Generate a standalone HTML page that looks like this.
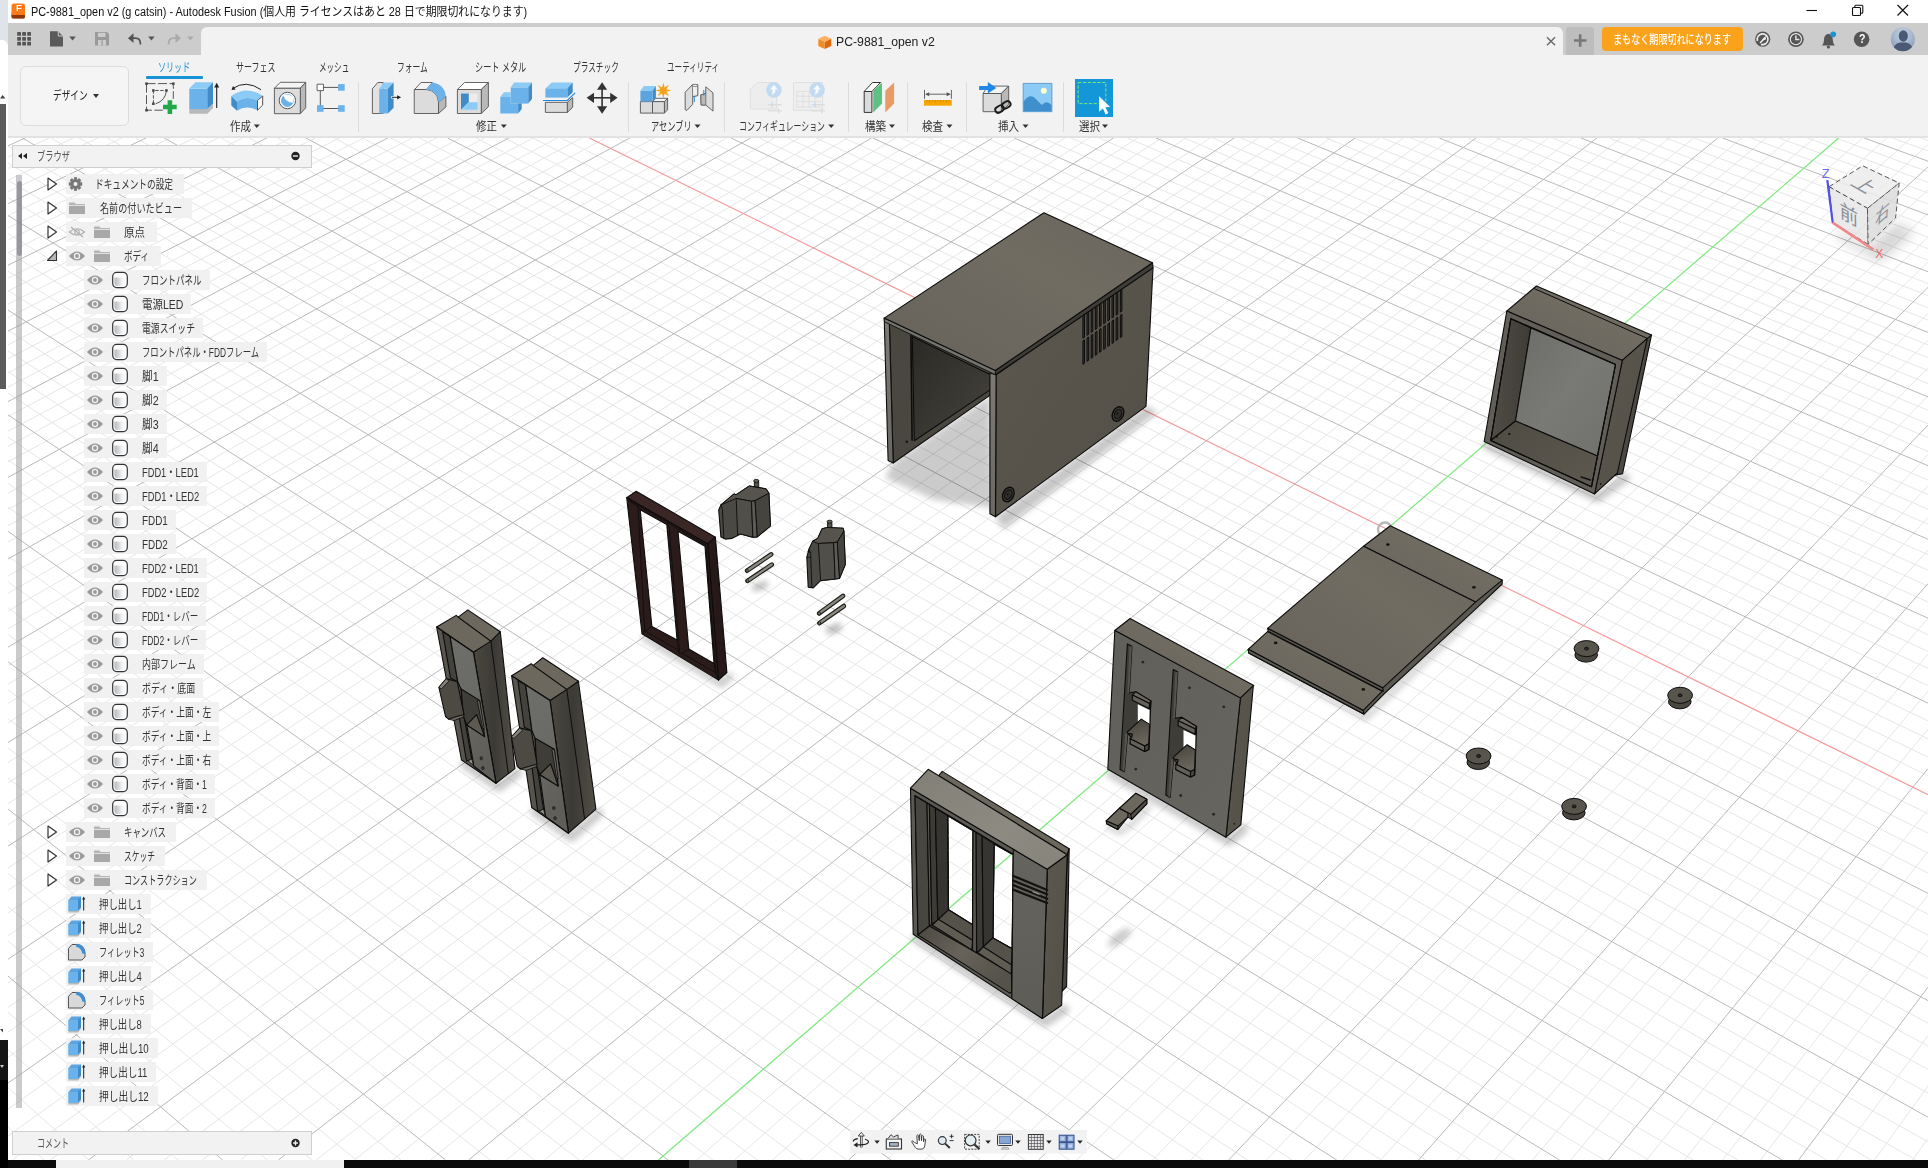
<!DOCTYPE html>
<html lang="ja"><head><meta charset="utf-8"><title>PC-9881_open v2 - Autodesk Fusion</title>
<style>
html,body{margin:0;padding:0;background:#fff;}
body{width:1928px;height:1168px;overflow:hidden;position:relative;font-family:"Liberation Sans","Noto Sans CJK JP",sans-serif;}
#r{position:absolute;left:0;top:0;width:1928px;height:1168px;overflow:hidden;}
#r div{position:absolute;}
#r svg{position:absolute;left:0;top:0;}
.t{position:absolute;white-space:nowrap;transform-origin:0 50%;line-height:16px;height:16px;display:inline-block;}
</style></head>
<body><div id="r">
<svg width="1928" height="1168" viewBox="0 0 1928 1168">
<defs><clipPath id="vpc"><rect x="8" y="138" width="1920" height="1022"/></clipPath></defs>
<rect x="8" y="138" width="1920" height="1022" fill="#ffffff"/>
<g clip-path="url(#vpc)">
<g id="grid"><path d="M8.0 157.1L49.2 138.0M8.0 168.5L73.4 138.0M8.0 180.1L97.6 138.0M8.0 191.8L121.8 138.0M8.0 215.6L170.2 138.0M8.0 227.8L194.4 138.0M8.0 240.1L218.6 138.0M8.0 252.6L242.7 138.0M8.0 278.1L291.1 138.0M8.0 291.0L315.3 138.0M8.0 304.2L339.5 138.0M8.0 317.6L363.7 138.0M8.0 344.8L412.1 138.0M8.0 1127.1L44.3 1160.0M8.0 358.7L436.2 138.0M8.0 1087.7L88.9 1160.0M8.0 372.8L460.4 138.0M8.0 1049.5L133.5 1160.0M8.0 387.1L484.6 138.0M8.0 1012.3L178.1 1160.0M8.0 416.4L533.0 138.0M8.0 940.9L267.2 1160.0M8.0 431.3L557.2 138.0M8.0 906.6L311.8 1160.0M8.0 446.4L581.4 138.0M8.0 873.2L356.3 1160.0M8.0 461.8L605.5 138.0M8.0 840.7L400.9 1160.0M8.0 493.2L653.9 138.0M8.0 778.0L490.1 1160.0M8.0 509.3L678.1 138.0M8.0 747.9L534.6 1160.0M8.0 525.6L702.3 138.0M8.0 718.5L579.2 1160.0M8.0 542.2L726.5 138.0M8.0 689.8L623.8 1160.0M8.0 576.0L774.8 138.0M8.0 634.5L712.9 1160.0M8.0 593.4L799.0 138.0M8.0 607.8L757.4 1160.0M8.0 611.0L823.2 138.0M8.0 581.7L802.0 1160.0M8.0 628.9L847.4 138.0M8.0 556.3L846.6 1160.0M8.0 665.5L895.7 138.0M8.0 507.0L935.7 1160.0M8.0 684.3L919.9 138.0M8.0 483.2L980.3 1160.0M8.0 703.4L944.1 138.0M8.0 459.9L1024.8 1160.0M8.0 722.7L968.3 138.0M8.0 437.1L1069.4 1160.0M8.0 762.5L1016.6 138.0M8.0 393.0L1158.5 1160.0M8.0 782.9L1040.8 138.0M8.0 371.6L1203.1 1160.0M8.0 803.6L1065.0 138.0M8.0 350.7L1247.6 1160.0M8.0 824.7L1089.2 138.0M8.0 330.2L1292.2 1160.0M8.0 868.0L1137.5 138.0M8.0 290.4L1381.3 1160.0M8.0 890.2L1161.7 138.0M8.0 271.1L1425.8 1160.0M8.0 912.8L1185.9 138.0M8.0 252.2L1470.4 1160.0M8.0 935.8L1210.1 138.0M8.0 233.7L1515.0 1160.0M8.0 983.1L1258.4 138.0M8.0 197.7L1604.1 1160.0M8.0 1007.4L1282.6 138.0M8.0 180.2L1648.6 1160.0M8.0 1032.1L1306.8 138.0M8.0 163.0L1693.2 1160.0M8.0 1057.3L1330.9 138.0M8.0 146.1L1737.7 1160.0M8.0 1109.2L1379.3 138.0M50.8 138.0L1826.8 1160.0M8.0 1135.9L1403.5 138.0M79.1 138.0L1871.4 1160.0M12.3 1160.0L1427.6 138.0M107.5 138.0L1915.9 1160.0M50.3 1160.0L1451.8 138.0M135.8 138.0L1928.0 1141.8M126.4 1160.0L1500.2 138.0M192.5 138.0L1928.0 1093.1M164.4 1160.0L1524.3 138.0M220.9 138.0L1928.0 1069.4M202.4 1160.0L1548.5 138.0M249.2 138.0L1928.0 1046.1M240.4 1160.0L1572.7 138.0M277.6 138.0L1928.0 1023.1M316.4 1160.0L1621.0 138.0M334.2 138.0L1928.0 978.5M354.5 1160.0L1645.2 138.0M362.6 138.0L1928.0 956.7M392.5 1160.0L1669.4 138.0M390.9 138.0L1928.0 935.2M430.5 1160.0L1693.5 138.0M419.3 138.0L1928.0 914.2M506.5 1160.0L1741.9 138.0M475.9 138.0L1928.0 873.0M544.5 1160.0L1766.1 138.0M504.3 138.0L1928.0 852.9M582.5 1160.0L1790.2 138.0M532.6 138.0L1928.0 833.2M620.5 1160.0L1814.4 138.0M561.0 138.0L1928.0 813.7M696.5 1160.0L1862.7 138.0M617.6 138.0L1928.0 775.7M734.5 1160.0L1886.9 138.0M646.0 138.0L1928.0 757.1M772.6 1160.0L1911.1 138.0M674.3 138.0L1928.0 738.8M810.6 1160.0L1928.0 144.6M702.7 138.0L1928.0 720.8M886.6 1160.0L1928.0 189.8M759.3 138.0L1928.0 685.6M924.6 1160.0L1928.0 213.2M787.7 138.0L1928.0 668.4M962.6 1160.0L1928.0 237.3M816.0 138.0L1928.0 651.4M1000.6 1160.0L1928.0 262.0M844.3 138.0L1928.0 634.7M1076.6 1160.0L1928.0 313.4M901.0 138.0L1928.0 602.0M1114.6 1160.0L1928.0 340.2M929.3 138.0L1928.0 586.0M1152.6 1160.0L1928.0 367.7M957.7 138.0L1928.0 570.2M1190.6 1160.0L1928.0 395.9M986.0 138.0L1928.0 554.7M1266.6 1160.0L1928.0 454.9M1042.7 138.0L1928.0 524.2M1304.6 1160.0L1928.0 485.7M1071.0 138.0L1928.0 509.3M1342.6 1160.0L1928.0 517.4M1099.3 138.0L1928.0 494.5M1380.6 1160.0L1928.0 550.0M1127.7 138.0L1928.0 480.0M1456.6 1160.0L1928.0 618.4M1184.3 138.0L1928.0 451.5M1494.6 1160.0L1928.0 654.1M1212.7 138.0L1928.0 437.6M1532.6 1160.0L1928.0 691.1M1241.0 138.0L1928.0 423.8M1570.6 1160.0L1928.0 729.2M1269.3 138.0L1928.0 410.3M1646.6 1160.0L1928.0 809.4M1326.0 138.0L1928.0 383.6M1684.6 1160.0L1928.0 851.5M1354.3 138.0L1928.0 370.6M1722.6 1160.0L1928.0 895.1M1382.6 138.0L1928.0 357.7M1760.6 1160.0L1928.0 940.3M1411.0 138.0L1928.0 344.9M1836.6 1160.0L1928.0 1035.6M1467.6 138.0L1928.0 320.0M1874.6 1160.0L1928.0 1085.9M1496.0 138.0L1928.0 307.7M1912.6 1160.0L1928.0 1138.2M1524.3 138.0L1928.0 295.6M1552.6 138.0L1928.0 283.6M1609.3 138.0L1928.0 260.2M1637.6 138.0L1928.0 248.6M1665.9 138.0L1928.0 237.2M1694.2 138.0L1928.0 226.0M1750.9 138.0L1928.0 203.9M1779.2 138.0L1928.0 193.0M1807.5 138.0L1928.0 182.3M1835.8 138.0L1928.0 171.7M1892.5 138.0L1928.0 150.8M1920.8 138.0L1928.0 140.6" stroke="#e5e5e5" stroke-width="0.95" fill="none"/>
<path d="M8.0 145.8L25.0 138.0M8.0 203.6L146.0 138.0M8.0 265.2L266.9 138.0M8.0 331.1L387.9 138.0M8.0 401.6L508.8 138.0M8.0 976.1L222.6 1160.0M8.0 477.4L629.7 138.0M8.0 809.0L445.5 1160.0M8.0 559.0L750.6 138.0M8.0 661.8L668.3 1160.0M8.0 647.1L871.6 138.0M8.0 531.3L891.1 1160.0M8.0 742.5L992.5 138.0M8.0 414.8L1113.9 1160.0M8.0 846.1L1113.4 138.0M8.0 310.1L1336.7 1160.0M8.0 959.2L1234.2 138.0M8.0 215.5L1559.5 1160.0M8.0 1083.0L1355.1 138.0M22.4 138.0L1782.3 1160.0M88.4 1160.0L1476.0 138.0M164.2 138.0L1928.0 1117.2M278.4 1160.0L1596.9 138.0M305.9 138.0L1928.0 1000.6M468.5 1160.0L1717.7 138.0M447.6 138.0L1928.0 893.4M848.6 1160.0L1928.0 166.9M731.0 138.0L1928.0 703.1M1038.6 1160.0L1928.0 287.4M872.7 138.0L1928.0 618.2M1228.6 1160.0L1928.0 425.0M1014.3 138.0L1928.0 539.3M1418.6 1160.0L1928.0 583.7M1156.0 138.0L1928.0 465.7M1608.6 1160.0L1928.0 768.6M1297.7 138.0L1928.0 396.9M1798.6 1160.0L1928.0 987.1M1439.3 138.0L1928.0 332.4M1580.9 138.0L1928.0 271.8M1722.6 138.0L1928.0 214.9M1864.2 138.0L1928.0 161.2" stroke="#b9b9b9" stroke-width="1" fill="none"/>
<path d="M589.3 138.0L1928.0 794.6" stroke="#f59a9a" stroke-width="1.2" fill="none"/>
<path d="M658.5 1160.0L1838.6 138.0" stroke="#7be87b" stroke-width="1.2" fill="none"/>
</g>
<defs>
<filter id="bl3" x="-30%" y="-30%" width="160%" height="160%"><feGaussianBlur stdDeviation="3"/></filter>
<filter id="bl6" x="-30%" y="-30%" width="160%" height="160%"><feGaussianBlur stdDeviation="6"/></filter>
<filter id="bl10" x="-30%" y="-30%" width="160%" height="160%"><feGaussianBlur stdDeviation="10"/></filter>
<linearGradient id="gTop" x1="0" y1="1" x2="1" y2="0"><stop offset="0" stop-color="#66625a"/><stop offset="0.6" stop-color="#706c62"/><stop offset="1" stop-color="#6a665d"/></linearGradient>
<linearGradient id="gRight" x1="0" y1="0" x2="1" y2="1"><stop offset="0" stop-color="#5c5850"/><stop offset="1" stop-color="#524f47"/></linearGradient>
<linearGradient id="gIn" x1="0" y1="0" x2="1" y2="1"><stop offset="0" stop-color="#2b2a26"/><stop offset="1" stop-color="#46433c"/></linearGradient>
<linearGradient id="gEdge" x1="0" y1="0" x2="0" y2="1"><stop offset="0" stop-color="#7c7a73"/><stop offset="1" stop-color="#6a6862"/></linearGradient>
<linearGradient id="gInL" x1="0" y1="0" x2="1" y2="0"><stop offset="0" stop-color="#504d46"/><stop offset="1" stop-color="#3e3c36"/></linearGradient>
<linearGradient id="gBack" x1="0" y1="0" x2="1" y2="1"><stop offset="0" stop-color="#6c6d68"/><stop offset="0.5" stop-color="#797a75"/><stop offset="1" stop-color="#6f706b"/></linearGradient>
<linearGradient id="gFloor" x1="0" y1="0" x2="1" y2="1"><stop offset="0" stop-color="#4e4b43"/><stop offset="1" stop-color="#5d594f"/></linearGradient>
<linearGradient id="gFront" x1="0" y1="0" x2="1" y2="1"><stop offset="0" stop-color="#615f59"/><stop offset="1" stop-color="#666560"/></linearGradient>
<linearGradient id="gShelf" x1="0" y1="0" x2="0.3" y2="1"><stop offset="0" stop-color="#45423c"/><stop offset="1" stop-color="#6a665c"/></linearGradient>
<linearGradient id="gFloor2" x1="0" y1="0" x2="1" y2="0.6"><stop offset="0" stop-color="#4b4841"/><stop offset="0.5" stop-color="#67635a"/><stop offset="1" stop-color="#55524a"/></linearGradient>
<linearGradient id="gCol" x1="0" y1="0" x2="0" y2="1"><stop offset="0" stop-color="#65645f"/><stop offset="1" stop-color="#5d5c57"/></linearGradient>
<linearGradient id="gTopL" x1="0" y1="0" x2="1" y2="1"><stop offset="0" stop-color="#827f77"/><stop offset="0.6" stop-color="#8d8a82"/><stop offset="1" stop-color="#86837b"/></linearGradient>
<linearGradient id="gFddR" x1="0" y1="0" x2="1" y2="0"><stop offset="0" stop-color="#4b4841"/><stop offset="0.5" stop-color="#3c3a35"/><stop offset="1" stop-color="#524f47"/></linearGradient>
<linearGradient id="gFddP" x1="0" y1="0" x2="0.4" y2="1"><stop offset="0" stop-color="#6e6e6a"/><stop offset="0.5" stop-color="#6a6a66"/><stop offset="1" stop-color="#5f5e59"/></linearGradient>
</defs>
<polygon points="893,462 990,396 993,508 935,500 885,478" fill="#000" opacity="0.2" filter="url(#bl3)"/>
<polygon points="995,517 1146,406 1158,412 1004,529" fill="#000" opacity="0.22" filter="url(#bl3)"/>
<polygon points="889.3,319.7 990.5,369.9 990.5,394.9 893.2,463.0" fill="#4a4740" stroke="#0c0c0c" stroke-width="1.1" stroke-linejoin="round" />
<polygon points="912.3,336.4 990.5,374.8 990.5,389.6 914.3,440.7" fill="url(#gIn)" stroke="#0c0c0c" stroke-width="1.1" stroke-linejoin="round" />
<polyline points="910.9,335.4 912.1,440.2" fill="none" stroke="#0c0c0c" stroke-width="1.6" stroke-linecap="round" stroke-linejoin="round" />
<ellipse cx="906.8" cy="441.7" rx="1.2" ry="1.2" fill="#111" stroke="none" stroke-width="0" transform="rotate(0 906.8 441.7)" />
<polygon points="884.2,318.1 889.3,320.7 893.2,463.0 888.1,460.4" fill="url(#gEdge)" stroke="#0c0c0c" stroke-width="1.1" stroke-linejoin="round" />
<polygon points="996.1,374.7 1153.0,267.9 1146.0,406.4 995.5,516.7" fill="url(#gRight)" stroke="#0c0c0c" stroke-width="1.1" stroke-linejoin="round" />
<polygon points="1082.9,312.9 1084.5,311.8 1084.5,337.1 1082.9,338.2" fill="#3a3833" stroke="#0c0c0c" stroke-width="1" stroke-linejoin="round" />
<polygon points="1087.0,310.2 1088.7,309.1 1088.7,334.2 1087.0,335.3" fill="#3a3833" stroke="#0c0c0c" stroke-width="1" stroke-linejoin="round" />
<polygon points="1091.2,307.5 1092.8,306.5 1092.8,331.3 1091.2,332.4" fill="#3a3833" stroke="#0c0c0c" stroke-width="1" stroke-linejoin="round" />
<polygon points="1095.3,304.9 1097.0,303.8 1097.0,328.4 1095.3,329.5" fill="#3a3833" stroke="#0c0c0c" stroke-width="1" stroke-linejoin="round" />
<polygon points="1099.5,302.2 1101.1,301.1 1101.1,325.6 1099.5,326.7" fill="#3a3833" stroke="#0c0c0c" stroke-width="1" stroke-linejoin="round" />
<polygon points="1103.7,299.6 1105.3,298.5 1105.3,322.7 1103.7,323.8" fill="#3a3833" stroke="#0c0c0c" stroke-width="1" stroke-linejoin="round" />
<polygon points="1107.8,296.9 1109.5,295.8 1109.5,319.8 1107.8,320.9" fill="#3a3833" stroke="#0c0c0c" stroke-width="1" stroke-linejoin="round" />
<polygon points="1112.0,294.2 1113.6,293.1 1113.6,316.9 1112.0,318.0" fill="#3a3833" stroke="#0c0c0c" stroke-width="1" stroke-linejoin="round" />
<polygon points="1116.1,291.6 1117.8,290.5 1117.8,314.0 1116.1,315.1" fill="#3a3833" stroke="#0c0c0c" stroke-width="1" stroke-linejoin="round" />
<polygon points="1120.3,288.9 1121.9,287.8 1121.9,311.1 1120.3,312.2" fill="#3a3833" stroke="#0c0c0c" stroke-width="1" stroke-linejoin="round" />
<polygon points="1082.9,341.0 1084.5,339.9 1084.5,363.2 1082.9,364.2" fill="#3a3833" stroke="#0c0c0c" stroke-width="1" stroke-linejoin="round" />
<polygon points="1087.0,338.1 1088.7,337.0 1088.7,360.2 1087.0,361.3" fill="#3a3833" stroke="#0c0c0c" stroke-width="1" stroke-linejoin="round" />
<polygon points="1091.2,335.3 1092.8,334.2 1092.8,357.2 1091.2,358.3" fill="#3a3833" stroke="#0c0c0c" stroke-width="1" stroke-linejoin="round" />
<polygon points="1095.3,332.4 1097.0,331.3 1097.0,354.2 1095.3,355.3" fill="#3a3833" stroke="#0c0c0c" stroke-width="1" stroke-linejoin="round" />
<polygon points="1099.5,329.6 1101.1,328.5 1101.1,351.3 1099.5,352.4" fill="#3a3833" stroke="#0c0c0c" stroke-width="1" stroke-linejoin="round" />
<polygon points="1103.7,326.7 1105.3,325.6 1105.3,348.3 1103.7,349.4" fill="#3a3833" stroke="#0c0c0c" stroke-width="1" stroke-linejoin="round" />
<polygon points="1107.8,323.9 1109.5,322.8 1109.5,345.3 1107.8,346.4" fill="#3a3833" stroke="#0c0c0c" stroke-width="1" stroke-linejoin="round" />
<polygon points="1112.0,321.0 1113.6,319.9 1113.6,342.4 1112.0,343.5" fill="#3a3833" stroke="#0c0c0c" stroke-width="1" stroke-linejoin="round" />
<polygon points="1116.1,318.2 1117.8,317.1 1117.8,339.4 1116.1,340.5" fill="#3a3833" stroke="#0c0c0c" stroke-width="1" stroke-linejoin="round" />
<polygon points="1120.3,315.3 1121.9,314.2 1121.9,336.4 1120.3,337.5" fill="#3a3833" stroke="#0c0c0c" stroke-width="1" stroke-linejoin="round" />
<ellipse cx="1008.3" cy="494.6" rx="5.4" ry="7.6" fill="#3f3d38" stroke="#0c0c0c" stroke-width="1.4" transform="rotate(25 1008.3 494.6)" />
<ellipse cx="1008.3" cy="494.6" rx="3.4" ry="5.1" fill="#2f2d29" stroke="#0c0c0c" stroke-width="1" transform="rotate(25 1008.3 494.6)" />
<ellipse cx="1007.7" cy="494.3" rx="0.8" ry="1.1" fill="#111" stroke="none" stroke-width="0" transform="rotate(25 1007.7 494.3)" />
<ellipse cx="1118.0" cy="414.0" rx="5.4" ry="7.6" fill="#3f3d38" stroke="#0c0c0c" stroke-width="1.4" transform="rotate(25 1118.0 414.0)" />
<ellipse cx="1118.0" cy="414.0" rx="3.4" ry="5.1" fill="#2f2d29" stroke="#0c0c0c" stroke-width="1" transform="rotate(25 1118.0 414.0)" />
<ellipse cx="1117.4" cy="413.7" rx="0.8" ry="1.1" fill="#111" stroke="none" stroke-width="0" transform="rotate(25 1117.4 413.7)" />
<polygon points="989.9,373.0 996.1,374.7 995.5,516.7 989.9,513.8" fill="url(#gEdge)" stroke="#0c0c0c" stroke-width="1.1" stroke-linejoin="round" />
<polygon points="995.3,370.5 1152.5,262.8 1153.0,267.9 995.5,374.7" fill="#3f3d38" stroke="#0c0c0c" stroke-width="1.1" stroke-linejoin="round" />
<polygon points="884.2,318.1 995.3,370.5 995.3,374.7 884.5,321.8" fill="#74746e" stroke="#0c0c0c" stroke-width="0.9" stroke-linejoin="round" />
<polygon points="1043.9,212.7 1152.5,262.8 995.3,370.5 884.2,318.1" fill="url(#gTop)" stroke="#0c0c0c" stroke-width="1.1" stroke-linejoin="round" />
<polyline points="1484.2,441.5 1594.6,493.9 1622.5,473.8" fill="none" stroke="#000" stroke-width="9" stroke-linejoin="round" stroke-linecap="round" opacity="0.22" filter="url(#bl3)" transform="translate(3,4)"/>
<polygon points="1643.9,339.8 1651.5,334.9 1622.5,473.8 1614.1,475.4" fill="#4c4942" stroke="#0c0c0c" stroke-width="1.1" stroke-linejoin="round" />
<polygon points="1506.8,311.1 1536.4,286.0 1651.5,334.9 1622.3,360.4" fill="url(#gTop)" stroke="#0c0c0c" stroke-width="1.1" stroke-linejoin="round" />
<polyline points="1534.0,288.5 1647.3,338.4" fill="none" stroke="#0c0c0c" stroke-width="1" stroke-linecap="round" stroke-linejoin="round" />
<polygon points="1622.3,360.4 1647.3,338.4 1617.4,473.0 1594.6,493.9" fill="url(#gRight)" stroke="#0c0c0c" stroke-width="1.1" stroke-linejoin="round" />
<polygon points="1506.8,311.1 1622.3,360.4 1594.6,493.9 1484.2,441.5" fill="#605e57" stroke="#0c0c0c" stroke-width="1.1" stroke-linejoin="round" />
<polygon points="1510.9,318.7 1615.5,364.5 1591.5,486.7 1490.8,440.5" fill="#55524a" stroke="#0c0c0c" stroke-width="1.1" stroke-linejoin="round" />
<polygon points="1510.9,318.7 1530.9,327.9 1515.5,421.0 1490.8,440.5" fill="url(#gInL)" stroke="#0c0c0c" stroke-width="1.1" stroke-linejoin="round" />
<polygon points="1530.9,327.9 1615.5,364.5 1597.4,455.9 1515.5,421.0" fill="url(#gBack)" stroke="#0c0c0c" stroke-width="1.1" stroke-linejoin="round" />
<polygon points="1515.5,421.0 1597.4,455.9 1591.5,486.7 1490.8,440.5" fill="url(#gFloor)" stroke="#0c0c0c" stroke-width="1.1" stroke-linejoin="round" />
<polygon points="1510.9,318.7 1615.5,364.5 1591.5,486.7 1490.8,440.5" fill="none" stroke="#0c0c0c" stroke-width="1.1" stroke-linejoin="round" />
<ellipse cx="1496.6" cy="436.8" rx="1.2" ry="1.0" fill="#111" stroke="none" stroke-width="0" transform="rotate(0 1496.6 436.8)" />
<ellipse cx="1509.3" cy="433.9" rx="1.2" ry="1.0" fill="#111" stroke="none" stroke-width="0" transform="rotate(0 1509.3 433.9)" />
<ellipse cx="1600.7" cy="484.1" rx="0.8" ry="1.0" fill="#111" stroke="none" stroke-width="0" transform="rotate(0 1600.7 484.1)" />
<polyline points="1581.2,477.1 1590.4,479.9" fill="none" stroke="#111" stroke-width="1.6" stroke-linecap="round" stroke-linejoin="round" />
<circle cx="1385" cy="529.5" r="7" fill="none" stroke="#b9b9b9" stroke-width="2.5"/>
<polyline points="1248.5,653 1364,714.5 1502,584" fill="none" stroke="#000" stroke-width="6" opacity="0.18" filter="url(#bl3)" transform="translate(2,3)"/>
<polygon points="1502.2,580.1 1502.2,584.0 1478.0,606.8 1384.5,693.5 1364.0,714.2 1248.7,653.0 1248.2,649.3" fill="#5a5850" stroke="#0c0c0c" stroke-width="1.1" stroke-linejoin="round"/>
<polygon points="1390.3,525.7 1502.2,580.1 1475.5,602.1 1363.6,546.2" fill="url(#gTop)" stroke="#0c0c0c" stroke-width="1.1" stroke-linejoin="round"/>
<polygon points="1248.2,649.3 1267.5,631.6 1382.3,691.2 1363.3,710.4" fill="url(#gTop)" stroke="#0c0c0c" stroke-width="1.1" stroke-linejoin="round"/>
<polygon points="1248.2,649.3 1363.3,710.4 1363.8,714.0 1248.7,652.9" fill="#5e5c55" stroke="#0c0c0c" stroke-width="1.1" stroke-linejoin="round"/>
<polygon points="1267.7,628.3 1382.8,687.8 1383.3,691.4 1268.2,631.4" fill="#55534c" stroke="#0c0c0c" stroke-width="1.1" stroke-linejoin="round"/>
<polygon points="1363.6,546.2 1475.5,602.1 1382.8,687.8 1267.7,628.3" fill="url(#gTop)" stroke="#0c0c0c" stroke-width="1.1" stroke-linejoin="round"/>
<ellipse cx="1387.8" cy="544.6" rx="1.8" ry="1.4" fill="#15140f"/>
<ellipse cx="1473.9" cy="587.3" rx="1.8" ry="1.4" fill="#15140f"/>
<ellipse cx="1275.7" cy="642.9" rx="1.8" ry="1.4" fill="#15140f"/>
<ellipse cx="1363.3" cy="689.4" rx="1.8" ry="1.4" fill="#15140f"/>
<polyline points="1107.8,769.3 1225.9,837.2 1240.8,824.9" fill="none" stroke="#000" stroke-width="9" stroke-linejoin="round" stroke-linecap="round" opacity="0.22" filter="url(#bl3)" transform="translate(3,4)"/>
<polygon points="1114.8,630.5 1130.1,618.5 1253.8,685.5 1240.6,700.2" fill="url(#gTop)" stroke="#0c0c0c" stroke-width="1.1" stroke-linejoin="round" />
<polygon points="1240.4,698.0 1253.3,685.7 1240.8,824.9 1225.9,837.2" fill="url(#gRight)" stroke="#0c0c0c" stroke-width="1.1" stroke-linejoin="round" />
<polygon points="1114.8,630.5 1240.4,698.0 1225.9,837.2 1107.8,769.3" fill="url(#gFront)" stroke="#0c0c0c" stroke-width="1.1" stroke-linejoin="round" />
<polygon points="1127.4,643.9 1131.9,646.2 1129.3,692.8 1135.8,691.7 1150.9,700.9 1149.0,749.5 1144.7,751.5 1130.1,743.8 1131.6,737.9 1127.7,733.3 1124.4,771.8 1120.0,769.5" fill="#3f3d37" stroke="#0c0c0c" stroke-width="1.1" stroke-linejoin="round" />
<polygon points="1129.6,647.0 1131.9,646.2 1129.3,692.8 1127.4,693.2" fill="#56534c" stroke="none" stroke-width="0" stroke-linejoin="round" />
<polygon points="1125.4,733.3 1127.7,733.3 1124.4,771.8 1122.5,770.3" fill="#56534c" stroke="none" stroke-width="0" stroke-linejoin="round" />
<polygon points="1137.8,704.3 1149.6,709.9 1149.3,724.4 1141.3,719.1 1137.8,722.2" fill="#ffffff" stroke="none" stroke-width="0" stroke-linejoin="round" />
<polygon points="1127.4,731.8 1141.3,719.1 1149.6,724.4 1148.7,744.1 1144.7,746.0 1130.1,738.7 1131.6,737.6 1132.4,734.1 1127.7,733.3" fill="url(#gShelf)" stroke="#0c0c0c" stroke-width="1.1" stroke-linejoin="round" />
<polygon points="1130.1,738.7 1144.7,746.0 1144.7,751.5 1130.1,743.8" fill="#63615a" stroke="#0c0c0c" stroke-width="1.1" stroke-linejoin="round" />
<polygon points="1144.7,746.0 1148.7,743.8 1148.7,749.5 1144.7,751.5" fill="#4a4740" stroke="#0c0c0c" stroke-width="1.1" stroke-linejoin="round" />
<polygon points="1132.4,695.1 1135.8,691.7 1150.9,700.9 1149.6,703.4" fill="#6c685e" stroke="#0c0c0c" stroke-width="1.1" stroke-linejoin="round" />
<polygon points="1132.4,695.1 1149.6,703.4 1149.3,708.7 1132.4,700.2" fill="#63615a" stroke="#0c0c0c" stroke-width="1.1" stroke-linejoin="round" />
<polygon points="1149.6,703.4 1150.9,700.9 1150.6,706.3 1149.3,708.7" fill="#4a4740" stroke="#0c0c0c" stroke-width="1.1" stroke-linejoin="round" />
<polygon points="1173.2,669.5 1177.7,671.8 1175.1,718.4 1181.5,717.3 1196.6,726.5 1194.8,775.1 1190.5,777.1 1175.8,769.4 1177.4,763.5 1173.5,758.9 1170.1,797.4 1165.8,795.1" fill="#3f3d37" stroke="#0c0c0c" stroke-width="1.1" stroke-linejoin="round" />
<polygon points="1175.4,672.6 1177.7,671.8 1175.1,718.4 1173.2,718.8" fill="#56534c" stroke="none" stroke-width="0" stroke-linejoin="round" />
<polygon points="1171.2,758.9 1173.5,758.9 1170.1,797.4 1168.3,795.9" fill="#56534c" stroke="none" stroke-width="0" stroke-linejoin="round" />
<polygon points="1183.5,729.9 1195.4,735.5 1195.1,750.0 1187.1,744.7 1183.5,747.8" fill="#ffffff" stroke="none" stroke-width="0" stroke-linejoin="round" />
<polygon points="1173.2,757.4 1187.1,744.7 1195.4,750.0 1194.5,769.7 1190.5,771.5 1175.8,764.3 1177.4,763.2 1178.2,759.7 1173.5,758.9" fill="url(#gShelf)" stroke="#0c0c0c" stroke-width="1.1" stroke-linejoin="round" />
<polygon points="1175.8,764.3 1190.5,771.5 1190.5,777.1 1175.8,769.4" fill="#63615a" stroke="#0c0c0c" stroke-width="1.1" stroke-linejoin="round" />
<polygon points="1190.5,771.5 1194.5,769.4 1194.5,775.1 1190.5,777.1" fill="#4a4740" stroke="#0c0c0c" stroke-width="1.1" stroke-linejoin="round" />
<polygon points="1178.2,720.7 1181.5,717.3 1196.6,726.5 1195.4,729.0" fill="#6c685e" stroke="#0c0c0c" stroke-width="1.1" stroke-linejoin="round" />
<polygon points="1178.2,720.7 1195.4,729.0 1195.1,734.2 1178.2,725.8" fill="#63615a" stroke="#0c0c0c" stroke-width="1.1" stroke-linejoin="round" />
<polygon points="1195.4,729.0 1196.6,726.5 1196.3,731.9 1195.1,734.2" fill="#4a4740" stroke="#0c0c0c" stroke-width="1.1" stroke-linejoin="round" />
<ellipse cx="1142.9" cy="662.1" rx="1.1" ry="0.9" fill="#2a2925" stroke="#111" stroke-width="0.6" transform="rotate(0 1142.9 662.1)" />
<ellipse cx="1189.4" cy="687.8" rx="1.1" ry="0.9" fill="#2a2925" stroke="#111" stroke-width="0.6" transform="rotate(0 1189.4 687.8)" />
<ellipse cx="1223.8" cy="706.8" rx="1.1" ry="0.9" fill="#2a2925" stroke="#111" stroke-width="0.6" transform="rotate(0 1223.8 706.8)" />
<ellipse cx="1135.8" cy="769.1" rx="1.1" ry="0.9" fill="#2a2925" stroke="#111" stroke-width="0.6" transform="rotate(0 1135.8 769.1)" />
<ellipse cx="1180.7" cy="795.5" rx="1.1" ry="1.0" fill="#2a2925" stroke="#111" stroke-width="0.6" transform="rotate(0 1180.7 795.5)" />
<ellipse cx="1213.6" cy="814.3" rx="1.1" ry="1.0" fill="#2a2925" stroke="#111" stroke-width="0.6" transform="rotate(0 1213.6 814.3)" />
<ellipse cx="1234.3" cy="823.8" rx="0.7" ry="1.0" fill="#111" stroke="none" stroke-width="0" transform="rotate(0 1234.3 823.8)" />
<polyline points="1106.7,823.8 1117.9,829.4 1131.7,819.4 1146.8,803.8" fill="none" stroke="#000" stroke-width="5" stroke-linejoin="round" stroke-linecap="round" opacity="0.2" filter="url(#bl3)" transform="translate(2,3)"/>
<polygon points="1106.3,820.9 1119.6,808.2 1127.9,812.7 1127.9,817.1 1117.9,829.4 1106.7,823.8" fill="#5a5850" stroke="#0c0c0c" stroke-width="1.1" stroke-linejoin="round" />
<polygon points="1106.3,820.9 1119.6,808.2 1130.8,814.3 1117.9,826.1" fill="#6c685e" stroke="#0c0c0c" stroke-width="1.1" stroke-linejoin="round" />
<polygon points="1106.3,820.9 1117.9,826.1 1117.9,829.4 1106.7,823.8" fill="#5e5c55" stroke="#0c0c0c" stroke-width="1.1" stroke-linejoin="round" />
<polygon points="1119.6,808.2 1135.7,793.3 1146.8,799.3 1146.8,803.8 1131.7,819.4 1127.9,817.1 1127.9,812.7" fill="#57544c" stroke="#0c0c0c" stroke-width="1.1" stroke-linejoin="round" />
<polygon points="1119.6,808.2 1135.7,793.3 1146.8,799.3 1130.8,814.3" fill="#6c685e" stroke="#0c0c0c" stroke-width="1.1" stroke-linejoin="round" />
<polygon points="1130.8,814.3 1146.8,799.3 1146.8,803.8 1131.7,819.4" fill="#524f47" stroke="#0c0c0c" stroke-width="1.1" stroke-linejoin="round" />
<polyline points="913.2,934.3 1042.4,1018.5 1061.6,1005.3" fill="none" stroke="#000" stroke-width="9" stroke-linejoin="round" stroke-linecap="round" opacity="0.22" filter="url(#bl3)" transform="translate(3,4)"/>
<polygon points="938.6,775.8 942.2,771.4 1069.2,848.7 1067.2,854.7" fill="#6b675d" stroke="#0c0c0c" stroke-width="1.1" stroke-linejoin="round" />
<polygon points="1067.2,854.7 1069.2,848.7 1066.6,986.5 1062.0,991.3" fill="#45433d" stroke="#0c0c0c" stroke-width="1.1" stroke-linejoin="round" />
<polygon points="1047.2,869.3 1067.2,854.7 1061.6,1005.3 1042.4,1018.5" fill="url(#gRight)" stroke="#0c0c0c" stroke-width="1.1" stroke-linejoin="round" />
<polygon points="910.5,788.2 1047.2,869.3 1042.4,1018.5 913.2,934.3" fill="#5b5953" stroke="#0c0c0c" stroke-width="1.1" stroke-linejoin="round" />
<polygon points="915.0,795.4 1013.3,854.1 1011.8,992.5 918.0,934.9" fill="#3b3934" stroke="#0c0c0c" stroke-width="1.1" stroke-linejoin="round" />
<polygon points="915.0,796.0 927.0,803.1 929.4,926.0 918.0,934.9" fill="#484640" stroke="#0c0c0c" stroke-width="1.1" stroke-linejoin="round" />
<polygon points="927.0,803.1 929.4,804.6 931.8,924.4 929.4,926.0" fill="#5a5851" stroke="#0c0c0c" stroke-width="1.1" stroke-linejoin="round" />
<polygon points="929.4,804.6 935.4,808.2 937.8,920.0 931.8,924.4" fill="#3d3b36" stroke="#0c0c0c" stroke-width="1.1" stroke-linejoin="round" />
<polygon points="935.4,808.2 947.9,815.7 948.5,909.8 937.8,920.0" fill="#373531" stroke="#0c0c0c" stroke-width="1.1" stroke-linejoin="round" />
<polygon points="947.9,815.7 973.1,830.7 972.5,924.8 948.5,909.8" fill="#ffffff" stroke="#0c0c0c" stroke-width="1.1" stroke-linejoin="round" />
<polygon points="994.1,843.9 1013.3,854.7 1012.1,948.7 992.9,937.9" fill="#ffffff" stroke="#0c0c0c" stroke-width="1.1" stroke-linejoin="round" />
<clipPath id="fpw"><polygon points="947.9,815.7 973.1,830.7 972.5,924.8 948.5,909.8"/><polygon points="994.1,843.9 1013.3,854.7 1012.1,948.7 992.9,937.9"/></clipPath><use href="#grid" clip-path="url(#fpw)"/>
<polyline points="947.9,815.7 973.1,830.7 972.5,924.8 948.5,909.8 947.9,815.7" fill="none" stroke="#0c0c0c" stroke-width="1.1" stroke-linecap="round" stroke-linejoin="round" />
<polyline points="994.1,843.9 1013.3,854.7 1012.1,948.7 992.9,937.9 994.1,843.9" fill="none" stroke="#0c0c0c" stroke-width="1.1" stroke-linecap="round" stroke-linejoin="round" />
<polygon points="973.1,830.7 976.1,832.5 976.7,953.0 972.5,950.6" fill="#56544d" stroke="#0c0c0c" stroke-width="1.1" stroke-linejoin="round" />
<polygon points="976.1,832.5 982.1,836.1 983.3,947.0 976.7,953.0" fill="#3d3b36" stroke="#0c0c0c" stroke-width="1.1" stroke-linejoin="round" />
<polygon points="982.1,836.1 994.1,843.9 992.9,937.9 983.3,947.0" fill="#373531" stroke="#0c0c0c" stroke-width="1.1" stroke-linejoin="round" />
<polygon points="918.0,934.9 929.4,926.0 972.5,950.6 976.7,953.0 1011.5,973.9 1011.8,992.5 1009.7,993.1" fill="url(#gFloor2)" stroke="#0c0c0c" stroke-width="1.1" stroke-linejoin="round" />
<polygon points="948.5,909.8 972.5,924.8 972.5,940.3 938.4,919.4" fill="#55524a" stroke="#0c0c0c" stroke-width="1.1" stroke-linejoin="round" />
<polygon points="938.4,919.4 972.5,940.3 971.9,949.9 932.1,925.0" fill="#5f5c53" stroke="#0c0c0c" stroke-width="1.1" stroke-linejoin="round" />
<polygon points="992.9,937.9 1012.1,948.7 1011.5,964.9 983.3,946.9" fill="#55524a" stroke="#0c0c0c" stroke-width="1.1" stroke-linejoin="round" />
<polygon points="983.3,946.9 1011.5,964.9 1011.2,973.9 977.7,952.6" fill="#5f5c53" stroke="#0c0c0c" stroke-width="1.1" stroke-linejoin="round" />
<polygon points="1013.3,849.2 1047.2,869.3 1042.4,1018.5 1011.8,998.6" fill="url(#gCol)" stroke="#0c0c0c" stroke-width="1.1" stroke-linejoin="round" />
<polyline points="1013.4,876.0 1047.1,890.0" fill="none" stroke="#141310" stroke-width="2.3" stroke-linecap="round" stroke-linejoin="round" />
<polyline points="1013.4,880.6 1047.1,894.3" fill="none" stroke="#141310" stroke-width="2.3" stroke-linecap="round" stroke-linejoin="round" />
<polyline points="1013.4,885.1 1047.1,898.7" fill="none" stroke="#141310" stroke-width="2.3" stroke-linecap="round" stroke-linejoin="round" />
<polyline points="1013.4,889.7 1047.1,903.0" fill="none" stroke="#141310" stroke-width="2.3" stroke-linecap="round" stroke-linejoin="round" />
<polyline points="1033.0,891.8 1039.0,894.2" fill="none" stroke="#9a9890" stroke-width="1.2" stroke-linecap="round" stroke-linejoin="round" />
<polygon points="910.5,788.2 928.2,769.3 1067.2,854.7 1047.2,869.3" fill="url(#gTopL)" stroke="#0c0c0c" stroke-width="1.1" stroke-linejoin="round" />
<polyline points="461.5,760.0 496.0,783.2 514.9,768.6" fill="none" stroke="#000" stroke-width="9" stroke-linejoin="round" stroke-linecap="round" opacity="0.22" filter="url(#bl3)" transform="translate(3,4)"/>
<polyline points="531.7,807.5 568.5,833.2 595.9,809.2" fill="none" stroke="#000" stroke-width="9" stroke-linejoin="round" stroke-linecap="round" opacity="0.22" filter="url(#bl3)" transform="translate(3,4)"/>
<polygon points="473.4,652.2 500.3,631.7 514.9,768.6 496.0,783.2" fill="url(#gFddR)" stroke="#0c0c0c" stroke-width="1.1" stroke-linejoin="round" />
<polyline points="490.9,641.1 508.3,773.7" fill="none" stroke="#0c0c0c" stroke-width="1" stroke-linecap="round" stroke-linejoin="round" />
<polygon points="436.6,627.0 456.2,615.4 458.4,617.1 490.9,641.1 473.4,652.2" fill="#6c685e" stroke="#0c0c0c" stroke-width="1.1" stroke-linejoin="round" />
<polygon points="458.2,617.1 467.8,609.9 500.3,631.7 490.9,641.1" fill="#6c685e" stroke="#0c0c0c" stroke-width="1.1" stroke-linejoin="round" />
<polygon points="436.6,627.0 473.4,652.2 496.0,783.2 461.5,760.0" fill="#57554e" stroke="#0c0c0c" stroke-width="1.1" stroke-linejoin="round" />
<polygon points="442.7,631.9 450.1,636.6 457.8,682.0 450.5,678.1" fill="#44423c" stroke="#0c0c0c" stroke-width="1.1" stroke-linejoin="round" />
<polygon points="459.3,717.4 464.0,716.2 471.8,759.3 466.5,761.1" fill="#44423c" stroke="#0c0c0c" stroke-width="1.1" stroke-linejoin="round" />
<polygon points="450.1,636.6 473.4,652.2 496.0,783.2 473.9,766.3 466.8,725.1 463.4,716.2 461.1,689.0 457.8,682.0" fill="url(#gFddP)" stroke="#0c0c0c" stroke-width="1.1" stroke-linejoin="round" />
<polygon points="461.1,689.0 479.6,700.4 484.6,736.6 466.8,725.1 463.4,716.2" fill="#3f3d37" stroke="#0c0c0c" stroke-width="1.1" stroke-linejoin="round" />
<polygon points="466.8,724.9 476.6,714.6 484.6,736.6" fill="#5d5a52" stroke="#0c0c0c" stroke-width="1.1" stroke-linejoin="round" />
<polygon points="477.2,700.1 479.6,700.7 484.3,729.3 482.5,727.7" fill="#6a675f" stroke="#0c0c0c" stroke-width="0.8" stroke-linejoin="round" />
<polygon points="468.0,760.8 471.8,759.1 473.5,765.4" fill="#9a988f" stroke="#0c0c0c" stroke-width="0.8" stroke-linejoin="round" />
<ellipse cx="481.3" cy="758.3" rx="1.2" ry="1.5" fill="#4a4842" stroke="#111" stroke-width="0.8" transform="rotate(0 481.3 758.3)" />
<ellipse cx="482.9" cy="768.1" rx="1.2" ry="1.5" fill="#4a4842" stroke="#111" stroke-width="0.8" transform="rotate(0 482.9 768.1)" />
<polygon points="446.3,678.6 438.9,687.3 445.5,716.5 448.6,719.1 458.6,716.1 464.0,714.7 457.2,681.7" fill="#4c4a43" stroke="#0c0c0c" stroke-width="1.1" stroke-linejoin="round" />
<polygon points="446.3,678.6 438.9,687.3 441.4,689.0 448.8,681.2" fill="#858279" stroke="#0c0c0c" stroke-width="0.8" stroke-linejoin="round" />
<polygon points="448.6,719.1 458.6,716.1 464.0,714.7 463.5,717.0 454.0,720.6" fill="#6a675f" stroke="#0c0c0c" stroke-width="0.8" stroke-linejoin="round" />
<polygon points="550.0,700.5 578.4,681.2 595.9,809.2 568.5,833.2" fill="url(#gFddR)" stroke="#0c0c0c" stroke-width="1.1" stroke-linejoin="round" />
<polyline points="566.8,689.4 584.6,819.0" fill="none" stroke="#0c0c0c" stroke-width="1" stroke-linecap="round" stroke-linejoin="round" />
<polygon points="511.6,675.7 531.2,663.7 533.2,665.4 566.8,689.4 550.0,700.5" fill="#6c685e" stroke="#0c0c0c" stroke-width="1.1" stroke-linejoin="round" />
<polygon points="533.2,665.4 542.8,657.7 578.4,681.2 566.8,689.4" fill="#6c685e" stroke="#0c0c0c" stroke-width="1.1" stroke-linejoin="round" />
<polygon points="511.6,675.7 550.0,700.5 568.5,833.2 531.7,807.5" fill="#57554e" stroke="#0c0c0c" stroke-width="1.1" stroke-linejoin="round" />
<polygon points="518.0,680.5 525.7,685.1 532.0,731.1 524.3,727.2" fill="#44423c" stroke="#0c0c0c" stroke-width="1.1" stroke-linejoin="round" />
<polygon points="532.0,767.1 537.1,765.8 543.5,809.4 537.7,811.4" fill="#44423c" stroke="#0c0c0c" stroke-width="1.1" stroke-linejoin="round" />
<polygon points="525.7,685.1 550.0,700.5 568.5,833.2 545.5,816.5 539.7,774.8 536.5,765.8 535.2,738.2 532.0,731.1" fill="url(#gFddP)" stroke="#0c0c0c" stroke-width="1.1" stroke-linejoin="round" />
<polygon points="535.2,738.2 554.4,749.3 558.3,786.1 539.7,774.8 536.5,765.8" fill="#3f3d37" stroke="#0c0c0c" stroke-width="1.1" stroke-linejoin="round" />
<polygon points="539.7,774.5 550.6,763.8 558.3,786.1" fill="#5d5a52" stroke="#0c0c0c" stroke-width="1.1" stroke-linejoin="round" />
<polygon points="551.9,749.1 554.4,749.7 558.3,778.6 556.4,777.1" fill="#6a675f" stroke="#0c0c0c" stroke-width="0.8" stroke-linejoin="round" />
<polygon points="539.4,811.0 543.5,809.2 545.1,815.6" fill="#9a988f" stroke="#0c0c0c" stroke-width="0.8" stroke-linejoin="round" />
<ellipse cx="553.8" cy="808.1" rx="1.2" ry="1.5" fill="#4a4842" stroke="#111" stroke-width="0.8" transform="rotate(0 553.8 808.1)" />
<ellipse cx="555.1" cy="818.2" rx="1.2" ry="1.5" fill="#4a4842" stroke="#111" stroke-width="0.8" transform="rotate(0 555.1 818.2)" />
<polygon points="519.8,727.9 511.4,736.9 517.2,766.4 520.4,769.0 531.3,765.8 537.1,764.2 531.3,730.8" fill="#4c4a43" stroke="#0c0c0c" stroke-width="1.1" stroke-linejoin="round" />
<polygon points="519.8,727.9 511.4,736.9 514.0,738.5 522.3,730.5" fill="#858279" stroke="#0c0c0c" stroke-width="0.8" stroke-linejoin="round" />
<polygon points="520.4,769.0 531.3,765.8 537.1,764.2 536.5,766.5 526.2,770.4" fill="#6a675f" stroke="#0c0c0c" stroke-width="0.8" stroke-linejoin="round" />
<polyline points="642.0,633.8 718.5,680.1 726.9,672.5" fill="none" stroke="#000" stroke-width="7" stroke-linejoin="round" stroke-linecap="round" opacity="0.22" filter="url(#bl3)" transform="translate(3,4)"/>
<polygon points="626.7,497.6 636.2,491.2 715.4,537.2 707.7,543.9" fill="#3a2725" stroke="#0c0c0c" stroke-width="1.1" stroke-linejoin="round" />
<polygon points="707.7,543.9 715.4,537.2 726.9,672.5 718.5,680.1" fill="#261918" stroke="#0c0c0c" stroke-width="1.1" stroke-linejoin="round" />
<path d="M626.7,497.6 L707.7,543.9 L718.5,680.1 L642.0,633.8 Z M640.2,509.7 L666.8,524.6 L677.1,640.1 L651.9,626.6 Z M678.0,531.3 L705.0,546.2 L714.0,663.5 L688.8,649.1 Z" fill="#2b1c1b" fill-rule="evenodd" stroke="#0c0c0c" stroke-width="1.1" stroke-linejoin="round"/>
<polyline points="629.0,500.2 638.0,507.0 644.7,630.8 642.0,633.8" fill="none" stroke="#0c0c0c" stroke-width="0.8" stroke-linecap="round" stroke-linejoin="round" />
<polyline points="638.0,507.0 640.2,509.7" fill="none" stroke="#0c0c0c" stroke-width="0.8" stroke-linecap="round" stroke-linejoin="round" />
<polyline points="644.7,630.8 651.9,626.6" fill="none" stroke="#0c0c0c" stroke-width="0.8" stroke-linecap="round" stroke-linejoin="round" />
<polyline points="644.7,630.8 678.0,650.0 679.8,653.6" fill="none" stroke="#0c0c0c" stroke-width="0.8" stroke-linecap="round" stroke-linejoin="round" />
<polyline points="678.0,650.0 677.1,640.1" fill="none" stroke="#0c0c0c" stroke-width="0.8" stroke-linecap="round" stroke-linejoin="round" />
<polyline points="667.2,522.3 669.0,527.1 679.8,653.6" fill="none" stroke="#0c0c0c" stroke-width="0.8" stroke-linecap="round" stroke-linejoin="round" />
<polyline points="681.9,653.1 688.8,649.1" fill="none" stroke="#0c0c0c" stroke-width="0.8" stroke-linecap="round" stroke-linejoin="round" />
<polyline points="681.9,653.1 715.8,672.9 718.5,680.1" fill="none" stroke="#0c0c0c" stroke-width="0.8" stroke-linecap="round" stroke-linejoin="round" />
<polyline points="715.8,672.9 714.0,663.5" fill="none" stroke="#0c0c0c" stroke-width="0.8" stroke-linecap="round" stroke-linejoin="round" />
<polyline points="629.0,500.2 705.9,545.1 715.8,672.9" fill="none" stroke="#0c0c0c" stroke-width="0.8" stroke-linecap="round" stroke-linejoin="round" />
<polygon points="754.4,481.6 758.7,481.6 758.7,487.8 754.4,487.2" fill="#55534c" stroke="#0c0c0c" stroke-width="0.9" stroke-linejoin="round" />
<ellipse cx="756.3" cy="480.9" rx="2.6" ry="1.5" fill="#6a685f" stroke="#0c0c0c" stroke-width="0.9" transform="rotate(0 756.3 480.9)" />
<polygon points="718.7,510.0 720.9,504.9 734.0,494.0 736.2,494.7 749.3,486.0 759.5,487.5 766.0,488.9 768.9,493.3 770.4,526.0 757.3,536.9 752.2,537.2 740.6,534.0 731.8,538.4 725.3,539.1 720.9,536.9" fill="#4a4944" stroke="#0c0c0c" stroke-width="1.1" stroke-linejoin="round" />
<polygon points="734.0,494.0 736.2,494.7 749.3,486.0 766.0,488.9 768.9,493.3 755.1,500.6 751.5,501.3 736.2,498.4 720.9,504.9" fill="#56544d" stroke="#0c0c0c" stroke-width="0.9" stroke-linejoin="round" />
<polygon points="736.2,498.4 751.5,501.3 752.9,537.2 740.6,534.0 737.6,534.7" fill="#504f4a" stroke="#0c0c0c" stroke-width="0.9" stroke-linejoin="round" />
<polygon points="751.5,501.3 755.1,500.6 757.3,536.9 752.9,537.2" fill="#5c5b56" stroke="#0c0c0c" stroke-width="0.9" stroke-linejoin="round" />
<polygon points="755.1,500.6 768.9,493.3 770.4,526.0 757.3,536.9" fill="#45443f" stroke="#0c0c0c" stroke-width="0.9" stroke-linejoin="round" />
<polyline points="720.9,504.9 722.4,509.3 723.8,537.7" fill="none" stroke="#0c0c0c" stroke-width="0.9" stroke-linecap="round" stroke-linejoin="round" />
<polygon points="827.6,522.4 831.9,522.4 831.9,528.5 827.6,527.9" fill="#55534c" stroke="#0c0c0c" stroke-width="0.9" stroke-linejoin="round" />
<ellipse cx="829.6" cy="521.7" rx="2.6" ry="1.5" fill="#6a685f" stroke="#0c0c0c" stroke-width="0.9" transform="rotate(0 829.6 521.7)" />
<polygon points="806.8,557.3 808.9,549.3 812.6,541.3 817.7,538.4 822.0,528.9 827.1,527.5 843.1,528.2 843.9,531.1 845.3,564.6 839.5,578.4 820.6,580.6 813.3,587.9 808.2,587.1" fill="#4a4944" stroke="#0c0c0c" stroke-width="1.1" stroke-linejoin="round" />
<polygon points="817.7,538.4 822.0,528.9 827.1,527.5 843.1,528.2 843.9,531.1 837.3,542.0 833.7,542.7 818.4,543.5 812.6,541.3" fill="#56544d" stroke="#0c0c0c" stroke-width="0.9" stroke-linejoin="round" />
<polygon points="818.4,543.5 833.7,542.7 835.1,579.1 820.6,580.6" fill="#504f4a" stroke="#0c0c0c" stroke-width="0.9" stroke-linejoin="round" />
<polygon points="833.7,542.7 837.3,542.0 839.5,578.4 835.1,579.1" fill="#5c5b56" stroke="#0c0c0c" stroke-width="0.9" stroke-linejoin="round" />
<polygon points="837.3,542.0 843.9,531.1 845.3,564.6 839.5,578.4" fill="#45443f" stroke="#0c0c0c" stroke-width="0.9" stroke-linejoin="round" />
<polyline points="808.9,549.3 810.7,554.4 811.8,586.4" fill="none" stroke="#0c0c0c" stroke-width="0.9" stroke-linecap="round" stroke-linejoin="round" />
<polyline points="806.8,557.3 810.4,557.3" fill="none" stroke="#0c0c0c" stroke-width="0.7" stroke-linecap="round" stroke-linejoin="round" />
<polyline points="807.8,551.5 811.0,552.2" fill="none" stroke="#0c0c0c" stroke-width="0.7" stroke-linecap="round" stroke-linejoin="round" />
<polygon points="750.7,586.4 766.7,580.6 768.2,586.4 755.1,591.5" fill="#000" opacity="0.3" filter="url(#bl3)"/>
<polygon points="824.9,628.6 839.5,622.8 842.4,629.3 828.6,634.4" fill="#000" opacity="0.3" filter="url(#bl3)"/>
<polyline points="747.1,570.7 771.1,554.4" fill="none" stroke="#1a1a17" stroke-width="4.6" stroke-linecap="round" stroke-linejoin="round" />
<polyline points="747.1,570.7 771.1,554.4" fill="none" stroke="#8b8981" stroke-width="2.4" stroke-linecap="round" stroke-linejoin="round" />
<ellipse cx="747.1" cy="570.7" rx="1.3" ry="1.6" fill="#77756d" stroke="#1a1a17" stroke-width="0.8" transform="rotate(0 747.1 570.7)" />
<polyline points="747.5,580.9 771.8,564.6" fill="none" stroke="#1a1a17" stroke-width="4.6" stroke-linecap="round" stroke-linejoin="round" />
<polyline points="747.5,580.9 771.8,564.6" fill="none" stroke="#8b8981" stroke-width="2.4" stroke-linecap="round" stroke-linejoin="round" />
<ellipse cx="747.5" cy="580.9" rx="1.3" ry="1.6" fill="#77756d" stroke="#1a1a17" stroke-width="0.8" transform="rotate(0 747.5 580.9)" />
<polyline points="819.1,613.3 843.1,595.9" fill="none" stroke="#1a1a17" stroke-width="4.6" stroke-linecap="round" stroke-linejoin="round" />
<polyline points="819.1,613.3 843.1,595.9" fill="none" stroke="#8b8981" stroke-width="2.4" stroke-linecap="round" stroke-linejoin="round" />
<ellipse cx="819.1" cy="613.3" rx="1.3" ry="1.6" fill="#77756d" stroke="#1a1a17" stroke-width="0.8" transform="rotate(0 819.1 613.3)" />
<polyline points="819.4,623.1 843.9,606.0" fill="none" stroke="#1a1a17" stroke-width="4.6" stroke-linecap="round" stroke-linejoin="round" />
<polyline points="819.4,623.1 843.9,606.0" fill="none" stroke="#8b8981" stroke-width="2.4" stroke-linecap="round" stroke-linejoin="round" />
<ellipse cx="819.4" cy="623.1" rx="1.3" ry="1.6" fill="#77756d" stroke="#1a1a17" stroke-width="0.8" transform="rotate(0 819.4 623.1)" />
<ellipse cx="1586.2" cy="654.9" rx="11.3" ry="7.2" fill="#4a4740" stroke="#0c0c0c" stroke-width="1"/>
<ellipse cx="1586.5" cy="648.6" rx="12.4" ry="8" fill="#58554d" stroke="#0c0c0c" stroke-width="1"/>
<ellipse cx="1586.5" cy="648.6" rx="2" ry="1.5" fill="#2a2925" stroke="#0c0c0c" stroke-width="0.8"/>
<ellipse cx="1679.8" cy="701.6" rx="11.3" ry="7.2" fill="#4a4740" stroke="#0c0c0c" stroke-width="1"/>
<ellipse cx="1680.1" cy="695.3" rx="12.4" ry="8" fill="#58554d" stroke="#0c0c0c" stroke-width="1"/>
<ellipse cx="1680.1" cy="695.3" rx="2" ry="1.5" fill="#2a2925" stroke="#0c0c0c" stroke-width="0.8"/>
<ellipse cx="1478.3" cy="762.3" rx="11.3" ry="7.2" fill="#4a4740" stroke="#0c0c0c" stroke-width="1"/>
<ellipse cx="1478.6" cy="756.0" rx="12.4" ry="8" fill="#58554d" stroke="#0c0c0c" stroke-width="1"/>
<ellipse cx="1478.6" cy="756.0" rx="2" ry="1.5" fill="#2a2925" stroke="#0c0c0c" stroke-width="0.8"/>
<ellipse cx="1573.8" cy="812.7" rx="11.3" ry="7.2" fill="#4a4740" stroke="#0c0c0c" stroke-width="1"/>
<ellipse cx="1574.1" cy="806.4" rx="12.4" ry="8" fill="#58554d" stroke="#0c0c0c" stroke-width="1"/>
<ellipse cx="1574.1" cy="806.4" rx="2" ry="1.5" fill="#2a2925" stroke="#0c0c0c" stroke-width="0.8"/>
<ellipse cx="1119.7" cy="937.5" rx="14" ry="5" fill="#000" opacity="0.22" filter="url(#bl3)" transform="rotate(-38 1119.7 937.5)"/>
<polygon points="1835.0,228.0 1868.0,247.0 1897.0,222.0 1915.0,232.0 1880.0,262.0 1840.0,240.0" fill="#000" opacity="0.16" filter="url(#bl6)"/>
<polygon points="1829.1,186.7 1862.7,165.8 1899.2,183.1 1867.5,208.3" fill="#ececec" fill-opacity="0.85" stroke="#555" stroke-width="1" stroke-dasharray="5 3"/>
<polygon points="1829.1,186.7 1867.5,208.3 1868.1,244.3 1832.7,222.7" fill="#e6e6e6" fill-opacity="0.85" stroke="#555" stroke-width="1" stroke-dasharray="5 3"/>
<polygon points="1867.5,208.3 1899.2,183.1 1895.6,217.9 1868.1,244.3" fill="#dcdcdc" fill-opacity="0.85" stroke="#555" stroke-width="1" stroke-dasharray="5 3"/>
<text font-family='"Liberation Sans","Noto Sans CJK JP",sans-serif' font-size="20" fill="#8a8f99" text-anchor="middle" transform="matrix(0.93,0.52,0.02,1,1849,222)">前</text>
<text font-family='"Liberation Sans","Noto Sans CJK JP",sans-serif' font-size="20" fill="#8a8f99" text-anchor="middle" transform="matrix(0.72,-0.62,-0.08,0.95,1882,220.5)">右</text>
<text font-family='"Liberation Sans","Noto Sans CJK JP",sans-serif' font-size="20" fill="#8a8f99" text-anchor="middle" transform="matrix(0.87,0.49,-0.85,0.53,1858.2,189.2)">上</text>
<path d="M1832.7 222.7L1827.3 180" stroke="#5050e8" stroke-width="2.2" fill="none"/>
<path d="M1832.7 222.7L1873.5 249.6" stroke="#f08888" stroke-width="2.6" fill="none"/>
<text x="1825.8" y="178" font-family='"Liberation Sans","Noto Sans CJK JP",sans-serif' font-size="13" fill="#6b6bf0" text-anchor="middle">Z</text>
<text x="1879.2" y="258" font-family='"Liberation Sans","Noto Sans CJK JP",sans-serif' font-size="12" fill="#f06a6a" text-anchor="middle">X</text>
</g>
</svg>
<div style="left:8px;top:0px;width:1920px;height:23px;background:#ffffff;"></div>
<div style="left:8px;top:23px;width:1920px;height:32px;background:#cccccc;"></div>
<div style="left:201px;top:27px;width:1362px;height:28px;background:#f2f2f2;border-radius:6px 6px 0 0;"></div>
<div style="left:1566px;top:27px;width:28px;height:28px;background:#bdbdbd;border-radius:3px 3px 0 0;"></div>
<div style="left:8px;top:55px;width:1920px;height:81px;background:#f2f2f2;"></div>
<div style="left:8px;top:136px;width:1920px;height:2px;background:#e2e2e2;"></div>
<div style="left:1602px;top:27px;width:141px;height:24px;background:#faa21b;border-radius:4px;"></div>
<div style="left:20px;top:66px;width:109px;height:60px;background:#f5f5f5;border:1px solid #dcdcdc;border-radius:6px;box-sizing:border-box;"></div>
<div style="left:146px;top:76px;width:57px;height:3px;background:#1a93d6;border-radius:1px;"></div>
<div style="left:358.3px;top:82px;width:1px;height:50px;background:#dcdcdc;"></div>
<div style="left:627.5px;top:82px;width:1px;height:50px;background:#dcdcdc;"></div>
<div style="left:724.1px;top:82px;width:1px;height:50px;background:#dcdcdc;"></div>
<div style="left:848.2px;top:82px;width:1px;height:50px;background:#dcdcdc;"></div>
<div style="left:907.3px;top:82px;width:1px;height:50px;background:#dcdcdc;"></div>
<div style="left:966.4px;top:82px;width:1px;height:50px;background:#dcdcdc;"></div>
<div style="left:1063.3px;top:82px;width:1px;height:50px;background:#dcdcdc;"></div>
<div style="left:1075px;top:79px;width:38px;height:38px;background:#1497d8;"></div>
<div style="left:0px;top:0px;width:8px;height:1168px;background:#ffffff;"></div>
<div style="left:0px;top:0px;width:8px;height:48px;background:#dfe3ea;"></div>
<div style="left:0px;top:40px;width:8px;height:50px;background:#ffffff;border-radius:0 6px 0 0;"></div>
<div style="left:0px;top:104px;width:6px;height:285px;background:#5c5c5c;"></div>
<div style="left:0px;top:1040px;width:8px;height:40px;background:#141414;"></div>
<div style="left:0px;top:1080px;width:8px;height:88px;background:#000000;"></div>
<div style="left:8px;top:1160px;width:1920px;height:8px;background:#0a0a0a;"></div>
<div style="left:56px;top:1160px;width:288px;height:8px;background:#f0f0f0;"></div>
<div style="left:689px;top:1160px;width:48px;height:8px;background:#3a3a3a;"></div>
<div style="left:12px;top:145px;width:300px;height:23px;background:#f2f2f2;border:1px solid #cfcfcf;box-sizing:border-box;"></div>
<div style="left:12px;top:1131px;width:300px;height:24px;background:#f2f2f2;border:1px solid #cfcfcf;box-sizing:border-box;"></div>
<div style="left:16px;top:175px;width:6px;height:933px;background:rgba(160,160,165,0.55);"></div>
<div style="left:17px;top:181px;width:5px;height:75px;background:rgba(120,120,125,0.6);border-radius:3px;"></div>
<div style="left:66px;top:174px;width:118px;height:20px;background:rgba(240,240,240,0.93);"></div>
<div style="left:66px;top:198px;width:126px;height:20px;background:rgba(240,240,240,0.93);"></div>
<div style="left:66px;top:222px;width:91px;height:20px;background:rgba(240,240,240,0.93);"></div>
<div style="left:66px;top:246px;width:95px;height:20px;background:rgba(240,240,240,0.93);"></div>
<div style="left:84px;top:270px;width:125.5px;height:20px;background:rgba(240,240,240,0.93);"></div>
<div style="left:84px;top:294px;width:107px;height:20px;background:rgba(240,240,240,0.93);"></div>
<div style="left:84px;top:318px;width:119px;height:20px;background:rgba(240,240,240,0.93);"></div>
<div style="left:84px;top:342px;width:183px;height:20px;background:rgba(240,240,240,0.93);"></div>
<div style="left:84px;top:366px;width:83px;height:20px;background:rgba(240,240,240,0.93);"></div>
<div style="left:84px;top:390px;width:83px;height:20px;background:rgba(240,240,240,0.93);"></div>
<div style="left:84px;top:414px;width:83px;height:20px;background:rgba(240,240,240,0.93);"></div>
<div style="left:84px;top:438px;width:83px;height:20px;background:rgba(240,240,240,0.93);"></div>
<div style="left:84px;top:462px;width:122.5px;height:20px;background:rgba(240,240,240,0.93);"></div>
<div style="left:84px;top:486px;width:123px;height:20px;background:rgba(240,240,240,0.93);"></div>
<div style="left:84px;top:510px;width:91.5px;height:20px;background:rgba(240,240,240,0.93);"></div>
<div style="left:84px;top:534px;width:91.5px;height:20px;background:rgba(240,240,240,0.93);"></div>
<div style="left:84px;top:558px;width:122.5px;height:20px;background:rgba(240,240,240,0.93);"></div>
<div style="left:84px;top:582px;width:123px;height:20px;background:rgba(240,240,240,0.93);"></div>
<div style="left:84px;top:606px;width:122px;height:20px;background:rgba(240,240,240,0.93);"></div>
<div style="left:84px;top:630px;width:122px;height:20px;background:rgba(240,240,240,0.93);"></div>
<div style="left:84px;top:654px;width:120px;height:20px;background:rgba(240,240,240,0.93);"></div>
<div style="left:84px;top:678px;width:119px;height:20px;background:rgba(240,240,240,0.93);"></div>
<div style="left:84px;top:702px;width:135px;height:20px;background:rgba(240,240,240,0.93);"></div>
<div style="left:84px;top:726px;width:135px;height:20px;background:rgba(240,240,240,0.93);"></div>
<div style="left:84px;top:750px;width:135px;height:20px;background:rgba(240,240,240,0.93);"></div>
<div style="left:84px;top:774px;width:131px;height:20px;background:rgba(240,240,240,0.93);"></div>
<div style="left:84px;top:798px;width:131px;height:20px;background:rgba(240,240,240,0.93);"></div>
<div style="left:66px;top:822px;width:110px;height:20px;background:rgba(240,240,240,0.93);"></div>
<div style="left:66px;top:846px;width:99px;height:20px;background:rgba(240,240,240,0.93);"></div>
<div style="left:66px;top:870px;width:141px;height:20px;background:rgba(240,240,240,0.93);"></div>
<div style="left:66px;top:894px;width:85px;height:20px;background:rgba(240,240,240,0.93);"></div>
<div style="left:66px;top:918px;width:85px;height:20px;background:rgba(240,240,240,0.93);"></div>
<div style="left:66px;top:942px;width:87px;height:20px;background:rgba(240,240,240,0.93);"></div>
<div style="left:66px;top:966px;width:85px;height:20px;background:rgba(240,240,240,0.93);"></div>
<div style="left:66px;top:990px;width:87px;height:20px;background:rgba(240,240,240,0.93);"></div>
<div style="left:66px;top:1014px;width:85px;height:20px;background:rgba(240,240,240,0.93);"></div>
<div style="left:66px;top:1038px;width:91.5px;height:20px;background:rgba(240,240,240,0.93);"></div>
<div style="left:66px;top:1062px;width:90px;height:20px;background:rgba(240,240,240,0.93);"></div>
<div style="left:66px;top:1086px;width:91.5px;height:20px;background:rgba(240,240,240,0.93);"></div>
<svg width="1928" height="1168" viewBox="0 0 1928 1168">
<path d="M22 153v6l-4 -3zM27 153v6l-4 -3z" fill="#222"/><circle cx="295.5" cy="156" r="4.2" fill="#222"/><rect x="293" y="155.3" width="5" height="1.4" fill="#f2f2f2"/><circle cx="295.5" cy="1143" r="4.2" fill="#222"/><rect x="293" y="1142.3" width="5" height="1.4" fill="#f2f2f2"/><rect x="294.8" y="1140.5" width="1.4" height="5" fill="#f2f2f2"/><path d="M48 178L56.5 184L48 190Z" fill="#fff" stroke="#333" stroke-width="1.2" stroke-linejoin="round"/><g transform="translate(75.5,184)"><rect x="-1.5" y="-6.6" width="3" height="13.2" fill="#787878" transform="rotate(0)"/><rect x="-1.5" y="-6.6" width="3" height="13.2" fill="#787878" transform="rotate(45)"/><rect x="-1.5" y="-6.6" width="3" height="13.2" fill="#787878" transform="rotate(90)"/><rect x="-1.5" y="-6.6" width="3" height="13.2" fill="#787878" transform="rotate(135)"/><rect x="-1.5" y="-6.6" width="3" height="13.2" fill="#787878" transform="rotate(180)"/><rect x="-1.5" y="-6.6" width="3" height="13.2" fill="#787878" transform="rotate(225)"/><rect x="-1.5" y="-6.6" width="3" height="13.2" fill="#787878" transform="rotate(270)"/><rect x="-1.5" y="-6.6" width="3" height="13.2" fill="#787878" transform="rotate(315)"/><circle r="4.7" fill="#787878"/><circle r="2" fill="#f0f0f0"/></g><path d="M48 202L56.5 208L48 214Z" fill="#fff" stroke="#333" stroke-width="1.2" stroke-linejoin="round"/><g transform="translate(77,208)"><path d="M-8 -5.5h5.5l1.2 1.5h9.3v1.2h-16z" fill="#b5b5b5"/><rect x="-8" y="-2" width="16" height="8" fill="#a8a8a8"/></g><path d="M48 226L56.5 232L48 238Z" fill="#fff" stroke="#333" stroke-width="1.2" stroke-linejoin="round"/><g transform="translate(77,232)"><path d="M-7.5 0Q0 -6.5 7.5 0Q0 6.5 -7.5 0Z" fill="none" stroke="#b0b0b0" stroke-width="1.2"/><circle r="2.3" fill="none" stroke="#b0b0b0" stroke-width="1.1"/><path d="M-6 -5L6 5" stroke="#b0b0b0" stroke-width="1.2"/></g><g transform="translate(102,232)"><path d="M-8 -5.5h5.5l1.2 1.5h9.3v1.2h-16z" fill="#b5b5b5"/><rect x="-8" y="-2" width="16" height="8" fill="#a8a8a8"/></g><path d="M56.5 251L56.5 260.5L47.5 260.5Z" fill="#b8b8b8" stroke="#333" stroke-width="1.1" stroke-linejoin="round"/><g transform="translate(77,256)"><path d="M-8 0Q-4 -4.6 0 -4.6Q4 -4.6 8 0Q4 4.6 0 4.6Q-4 4.6 -8 0Z" fill="#9a9a9a"/><circle r="3.2" fill="#f2f2f2"/><circle r="1.9" fill="#9a9a9a"/></g><g transform="translate(102,256)"><path d="M-8 -5.5h5.5l1.2 1.5h9.3v1.2h-16z" fill="#b5b5b5"/><rect x="-8" y="-2" width="16" height="8" fill="#a8a8a8"/></g><g transform="translate(95,280)"><path d="M-8 0Q-4 -4.6 0 -4.6Q4 -4.6 8 0Q4 4.6 0 4.6Q-4 4.6 -8 0Z" fill="#9a9a9a"/><circle r="3.2" fill="#f2f2f2"/><circle r="1.9" fill="#9a9a9a"/></g><g transform="translate(120,280)"><defs><linearGradient id="bg280" x1="0" x2="1"><stop offset="0" stop-color="#b4b9c0"/><stop offset="0.7" stop-color="#f2f3f4"/><stop offset="1" stop-color="#fff"/></linearGradient></defs><rect x="-7.3" y="-7.6" width="14.6" height="15.2" rx="4" fill="#fff" stroke="#333" stroke-width="1.2"/><path d="M-5.6 -2.5h11.2v5.5q0 3 -3 3h-5.2q-3 0 -3 -3z" fill="url(#bg280)"/></g><g transform="translate(95,304)"><path d="M-8 0Q-4 -4.6 0 -4.6Q4 -4.6 8 0Q4 4.6 0 4.6Q-4 4.6 -8 0Z" fill="#9a9a9a"/><circle r="3.2" fill="#f2f2f2"/><circle r="1.9" fill="#9a9a9a"/></g><g transform="translate(120,304)"><defs><linearGradient id="bg304" x1="0" x2="1"><stop offset="0" stop-color="#b4b9c0"/><stop offset="0.7" stop-color="#f2f3f4"/><stop offset="1" stop-color="#fff"/></linearGradient></defs><rect x="-7.3" y="-7.6" width="14.6" height="15.2" rx="4" fill="#fff" stroke="#333" stroke-width="1.2"/><path d="M-5.6 -2.5h11.2v5.5q0 3 -3 3h-5.2q-3 0 -3 -3z" fill="url(#bg304)"/></g><g transform="translate(95,328)"><path d="M-8 0Q-4 -4.6 0 -4.6Q4 -4.6 8 0Q4 4.6 0 4.6Q-4 4.6 -8 0Z" fill="#9a9a9a"/><circle r="3.2" fill="#f2f2f2"/><circle r="1.9" fill="#9a9a9a"/></g><g transform="translate(120,328)"><defs><linearGradient id="bg328" x1="0" x2="1"><stop offset="0" stop-color="#b4b9c0"/><stop offset="0.7" stop-color="#f2f3f4"/><stop offset="1" stop-color="#fff"/></linearGradient></defs><rect x="-7.3" y="-7.6" width="14.6" height="15.2" rx="4" fill="#fff" stroke="#333" stroke-width="1.2"/><path d="M-5.6 -2.5h11.2v5.5q0 3 -3 3h-5.2q-3 0 -3 -3z" fill="url(#bg328)"/></g><g transform="translate(95,352)"><path d="M-8 0Q-4 -4.6 0 -4.6Q4 -4.6 8 0Q4 4.6 0 4.6Q-4 4.6 -8 0Z" fill="#9a9a9a"/><circle r="3.2" fill="#f2f2f2"/><circle r="1.9" fill="#9a9a9a"/></g><g transform="translate(120,352)"><defs><linearGradient id="bg352" x1="0" x2="1"><stop offset="0" stop-color="#b4b9c0"/><stop offset="0.7" stop-color="#f2f3f4"/><stop offset="1" stop-color="#fff"/></linearGradient></defs><rect x="-7.3" y="-7.6" width="14.6" height="15.2" rx="4" fill="#fff" stroke="#333" stroke-width="1.2"/><path d="M-5.6 -2.5h11.2v5.5q0 3 -3 3h-5.2q-3 0 -3 -3z" fill="url(#bg352)"/></g><g transform="translate(95,376)"><path d="M-8 0Q-4 -4.6 0 -4.6Q4 -4.6 8 0Q4 4.6 0 4.6Q-4 4.6 -8 0Z" fill="#9a9a9a"/><circle r="3.2" fill="#f2f2f2"/><circle r="1.9" fill="#9a9a9a"/></g><g transform="translate(120,376)"><defs><linearGradient id="bg376" x1="0" x2="1"><stop offset="0" stop-color="#b4b9c0"/><stop offset="0.7" stop-color="#f2f3f4"/><stop offset="1" stop-color="#fff"/></linearGradient></defs><rect x="-7.3" y="-7.6" width="14.6" height="15.2" rx="4" fill="#fff" stroke="#333" stroke-width="1.2"/><path d="M-5.6 -2.5h11.2v5.5q0 3 -3 3h-5.2q-3 0 -3 -3z" fill="url(#bg376)"/></g><g transform="translate(95,400)"><path d="M-8 0Q-4 -4.6 0 -4.6Q4 -4.6 8 0Q4 4.6 0 4.6Q-4 4.6 -8 0Z" fill="#9a9a9a"/><circle r="3.2" fill="#f2f2f2"/><circle r="1.9" fill="#9a9a9a"/></g><g transform="translate(120,400)"><defs><linearGradient id="bg400" x1="0" x2="1"><stop offset="0" stop-color="#b4b9c0"/><stop offset="0.7" stop-color="#f2f3f4"/><stop offset="1" stop-color="#fff"/></linearGradient></defs><rect x="-7.3" y="-7.6" width="14.6" height="15.2" rx="4" fill="#fff" stroke="#333" stroke-width="1.2"/><path d="M-5.6 -2.5h11.2v5.5q0 3 -3 3h-5.2q-3 0 -3 -3z" fill="url(#bg400)"/></g><g transform="translate(95,424)"><path d="M-8 0Q-4 -4.6 0 -4.6Q4 -4.6 8 0Q4 4.6 0 4.6Q-4 4.6 -8 0Z" fill="#9a9a9a"/><circle r="3.2" fill="#f2f2f2"/><circle r="1.9" fill="#9a9a9a"/></g><g transform="translate(120,424)"><defs><linearGradient id="bg424" x1="0" x2="1"><stop offset="0" stop-color="#b4b9c0"/><stop offset="0.7" stop-color="#f2f3f4"/><stop offset="1" stop-color="#fff"/></linearGradient></defs><rect x="-7.3" y="-7.6" width="14.6" height="15.2" rx="4" fill="#fff" stroke="#333" stroke-width="1.2"/><path d="M-5.6 -2.5h11.2v5.5q0 3 -3 3h-5.2q-3 0 -3 -3z" fill="url(#bg424)"/></g><g transform="translate(95,448)"><path d="M-8 0Q-4 -4.6 0 -4.6Q4 -4.6 8 0Q4 4.6 0 4.6Q-4 4.6 -8 0Z" fill="#9a9a9a"/><circle r="3.2" fill="#f2f2f2"/><circle r="1.9" fill="#9a9a9a"/></g><g transform="translate(120,448)"><defs><linearGradient id="bg448" x1="0" x2="1"><stop offset="0" stop-color="#b4b9c0"/><stop offset="0.7" stop-color="#f2f3f4"/><stop offset="1" stop-color="#fff"/></linearGradient></defs><rect x="-7.3" y="-7.6" width="14.6" height="15.2" rx="4" fill="#fff" stroke="#333" stroke-width="1.2"/><path d="M-5.6 -2.5h11.2v5.5q0 3 -3 3h-5.2q-3 0 -3 -3z" fill="url(#bg448)"/></g><g transform="translate(95,472)"><path d="M-8 0Q-4 -4.6 0 -4.6Q4 -4.6 8 0Q4 4.6 0 4.6Q-4 4.6 -8 0Z" fill="#9a9a9a"/><circle r="3.2" fill="#f2f2f2"/><circle r="1.9" fill="#9a9a9a"/></g><g transform="translate(120,472)"><defs><linearGradient id="bg472" x1="0" x2="1"><stop offset="0" stop-color="#b4b9c0"/><stop offset="0.7" stop-color="#f2f3f4"/><stop offset="1" stop-color="#fff"/></linearGradient></defs><rect x="-7.3" y="-7.6" width="14.6" height="15.2" rx="4" fill="#fff" stroke="#333" stroke-width="1.2"/><path d="M-5.6 -2.5h11.2v5.5q0 3 -3 3h-5.2q-3 0 -3 -3z" fill="url(#bg472)"/></g><g transform="translate(95,496)"><path d="M-8 0Q-4 -4.6 0 -4.6Q4 -4.6 8 0Q4 4.6 0 4.6Q-4 4.6 -8 0Z" fill="#9a9a9a"/><circle r="3.2" fill="#f2f2f2"/><circle r="1.9" fill="#9a9a9a"/></g><g transform="translate(120,496)"><defs><linearGradient id="bg496" x1="0" x2="1"><stop offset="0" stop-color="#b4b9c0"/><stop offset="0.7" stop-color="#f2f3f4"/><stop offset="1" stop-color="#fff"/></linearGradient></defs><rect x="-7.3" y="-7.6" width="14.6" height="15.2" rx="4" fill="#fff" stroke="#333" stroke-width="1.2"/><path d="M-5.6 -2.5h11.2v5.5q0 3 -3 3h-5.2q-3 0 -3 -3z" fill="url(#bg496)"/></g><g transform="translate(95,520)"><path d="M-8 0Q-4 -4.6 0 -4.6Q4 -4.6 8 0Q4 4.6 0 4.6Q-4 4.6 -8 0Z" fill="#9a9a9a"/><circle r="3.2" fill="#f2f2f2"/><circle r="1.9" fill="#9a9a9a"/></g><g transform="translate(120,520)"><defs><linearGradient id="bg520" x1="0" x2="1"><stop offset="0" stop-color="#b4b9c0"/><stop offset="0.7" stop-color="#f2f3f4"/><stop offset="1" stop-color="#fff"/></linearGradient></defs><rect x="-7.3" y="-7.6" width="14.6" height="15.2" rx="4" fill="#fff" stroke="#333" stroke-width="1.2"/><path d="M-5.6 -2.5h11.2v5.5q0 3 -3 3h-5.2q-3 0 -3 -3z" fill="url(#bg520)"/></g><g transform="translate(95,544)"><path d="M-8 0Q-4 -4.6 0 -4.6Q4 -4.6 8 0Q4 4.6 0 4.6Q-4 4.6 -8 0Z" fill="#9a9a9a"/><circle r="3.2" fill="#f2f2f2"/><circle r="1.9" fill="#9a9a9a"/></g><g transform="translate(120,544)"><defs><linearGradient id="bg544" x1="0" x2="1"><stop offset="0" stop-color="#b4b9c0"/><stop offset="0.7" stop-color="#f2f3f4"/><stop offset="1" stop-color="#fff"/></linearGradient></defs><rect x="-7.3" y="-7.6" width="14.6" height="15.2" rx="4" fill="#fff" stroke="#333" stroke-width="1.2"/><path d="M-5.6 -2.5h11.2v5.5q0 3 -3 3h-5.2q-3 0 -3 -3z" fill="url(#bg544)"/></g><g transform="translate(95,568)"><path d="M-8 0Q-4 -4.6 0 -4.6Q4 -4.6 8 0Q4 4.6 0 4.6Q-4 4.6 -8 0Z" fill="#9a9a9a"/><circle r="3.2" fill="#f2f2f2"/><circle r="1.9" fill="#9a9a9a"/></g><g transform="translate(120,568)"><defs><linearGradient id="bg568" x1="0" x2="1"><stop offset="0" stop-color="#b4b9c0"/><stop offset="0.7" stop-color="#f2f3f4"/><stop offset="1" stop-color="#fff"/></linearGradient></defs><rect x="-7.3" y="-7.6" width="14.6" height="15.2" rx="4" fill="#fff" stroke="#333" stroke-width="1.2"/><path d="M-5.6 -2.5h11.2v5.5q0 3 -3 3h-5.2q-3 0 -3 -3z" fill="url(#bg568)"/></g><g transform="translate(95,592)"><path d="M-8 0Q-4 -4.6 0 -4.6Q4 -4.6 8 0Q4 4.6 0 4.6Q-4 4.6 -8 0Z" fill="#9a9a9a"/><circle r="3.2" fill="#f2f2f2"/><circle r="1.9" fill="#9a9a9a"/></g><g transform="translate(120,592)"><defs><linearGradient id="bg592" x1="0" x2="1"><stop offset="0" stop-color="#b4b9c0"/><stop offset="0.7" stop-color="#f2f3f4"/><stop offset="1" stop-color="#fff"/></linearGradient></defs><rect x="-7.3" y="-7.6" width="14.6" height="15.2" rx="4" fill="#fff" stroke="#333" stroke-width="1.2"/><path d="M-5.6 -2.5h11.2v5.5q0 3 -3 3h-5.2q-3 0 -3 -3z" fill="url(#bg592)"/></g><g transform="translate(95,616)"><path d="M-8 0Q-4 -4.6 0 -4.6Q4 -4.6 8 0Q4 4.6 0 4.6Q-4 4.6 -8 0Z" fill="#9a9a9a"/><circle r="3.2" fill="#f2f2f2"/><circle r="1.9" fill="#9a9a9a"/></g><g transform="translate(120,616)"><defs><linearGradient id="bg616" x1="0" x2="1"><stop offset="0" stop-color="#b4b9c0"/><stop offset="0.7" stop-color="#f2f3f4"/><stop offset="1" stop-color="#fff"/></linearGradient></defs><rect x="-7.3" y="-7.6" width="14.6" height="15.2" rx="4" fill="#fff" stroke="#333" stroke-width="1.2"/><path d="M-5.6 -2.5h11.2v5.5q0 3 -3 3h-5.2q-3 0 -3 -3z" fill="url(#bg616)"/></g><g transform="translate(95,640)"><path d="M-8 0Q-4 -4.6 0 -4.6Q4 -4.6 8 0Q4 4.6 0 4.6Q-4 4.6 -8 0Z" fill="#9a9a9a"/><circle r="3.2" fill="#f2f2f2"/><circle r="1.9" fill="#9a9a9a"/></g><g transform="translate(120,640)"><defs><linearGradient id="bg640" x1="0" x2="1"><stop offset="0" stop-color="#b4b9c0"/><stop offset="0.7" stop-color="#f2f3f4"/><stop offset="1" stop-color="#fff"/></linearGradient></defs><rect x="-7.3" y="-7.6" width="14.6" height="15.2" rx="4" fill="#fff" stroke="#333" stroke-width="1.2"/><path d="M-5.6 -2.5h11.2v5.5q0 3 -3 3h-5.2q-3 0 -3 -3z" fill="url(#bg640)"/></g><g transform="translate(95,664)"><path d="M-8 0Q-4 -4.6 0 -4.6Q4 -4.6 8 0Q4 4.6 0 4.6Q-4 4.6 -8 0Z" fill="#9a9a9a"/><circle r="3.2" fill="#f2f2f2"/><circle r="1.9" fill="#9a9a9a"/></g><g transform="translate(120,664)"><defs><linearGradient id="bg664" x1="0" x2="1"><stop offset="0" stop-color="#b4b9c0"/><stop offset="0.7" stop-color="#f2f3f4"/><stop offset="1" stop-color="#fff"/></linearGradient></defs><rect x="-7.3" y="-7.6" width="14.6" height="15.2" rx="4" fill="#fff" stroke="#333" stroke-width="1.2"/><path d="M-5.6 -2.5h11.2v5.5q0 3 -3 3h-5.2q-3 0 -3 -3z" fill="url(#bg664)"/></g><g transform="translate(95,688)"><path d="M-8 0Q-4 -4.6 0 -4.6Q4 -4.6 8 0Q4 4.6 0 4.6Q-4 4.6 -8 0Z" fill="#9a9a9a"/><circle r="3.2" fill="#f2f2f2"/><circle r="1.9" fill="#9a9a9a"/></g><g transform="translate(120,688)"><defs><linearGradient id="bg688" x1="0" x2="1"><stop offset="0" stop-color="#b4b9c0"/><stop offset="0.7" stop-color="#f2f3f4"/><stop offset="1" stop-color="#fff"/></linearGradient></defs><rect x="-7.3" y="-7.6" width="14.6" height="15.2" rx="4" fill="#fff" stroke="#333" stroke-width="1.2"/><path d="M-5.6 -2.5h11.2v5.5q0 3 -3 3h-5.2q-3 0 -3 -3z" fill="url(#bg688)"/></g><g transform="translate(95,712)"><path d="M-8 0Q-4 -4.6 0 -4.6Q4 -4.6 8 0Q4 4.6 0 4.6Q-4 4.6 -8 0Z" fill="#9a9a9a"/><circle r="3.2" fill="#f2f2f2"/><circle r="1.9" fill="#9a9a9a"/></g><g transform="translate(120,712)"><defs><linearGradient id="bg712" x1="0" x2="1"><stop offset="0" stop-color="#b4b9c0"/><stop offset="0.7" stop-color="#f2f3f4"/><stop offset="1" stop-color="#fff"/></linearGradient></defs><rect x="-7.3" y="-7.6" width="14.6" height="15.2" rx="4" fill="#fff" stroke="#333" stroke-width="1.2"/><path d="M-5.6 -2.5h11.2v5.5q0 3 -3 3h-5.2q-3 0 -3 -3z" fill="url(#bg712)"/></g><g transform="translate(95,736)"><path d="M-8 0Q-4 -4.6 0 -4.6Q4 -4.6 8 0Q4 4.6 0 4.6Q-4 4.6 -8 0Z" fill="#9a9a9a"/><circle r="3.2" fill="#f2f2f2"/><circle r="1.9" fill="#9a9a9a"/></g><g transform="translate(120,736)"><defs><linearGradient id="bg736" x1="0" x2="1"><stop offset="0" stop-color="#b4b9c0"/><stop offset="0.7" stop-color="#f2f3f4"/><stop offset="1" stop-color="#fff"/></linearGradient></defs><rect x="-7.3" y="-7.6" width="14.6" height="15.2" rx="4" fill="#fff" stroke="#333" stroke-width="1.2"/><path d="M-5.6 -2.5h11.2v5.5q0 3 -3 3h-5.2q-3 0 -3 -3z" fill="url(#bg736)"/></g><g transform="translate(95,760)"><path d="M-8 0Q-4 -4.6 0 -4.6Q4 -4.6 8 0Q4 4.6 0 4.6Q-4 4.6 -8 0Z" fill="#9a9a9a"/><circle r="3.2" fill="#f2f2f2"/><circle r="1.9" fill="#9a9a9a"/></g><g transform="translate(120,760)"><defs><linearGradient id="bg760" x1="0" x2="1"><stop offset="0" stop-color="#b4b9c0"/><stop offset="0.7" stop-color="#f2f3f4"/><stop offset="1" stop-color="#fff"/></linearGradient></defs><rect x="-7.3" y="-7.6" width="14.6" height="15.2" rx="4" fill="#fff" stroke="#333" stroke-width="1.2"/><path d="M-5.6 -2.5h11.2v5.5q0 3 -3 3h-5.2q-3 0 -3 -3z" fill="url(#bg760)"/></g><g transform="translate(95,784)"><path d="M-8 0Q-4 -4.6 0 -4.6Q4 -4.6 8 0Q4 4.6 0 4.6Q-4 4.6 -8 0Z" fill="#9a9a9a"/><circle r="3.2" fill="#f2f2f2"/><circle r="1.9" fill="#9a9a9a"/></g><g transform="translate(120,784)"><defs><linearGradient id="bg784" x1="0" x2="1"><stop offset="0" stop-color="#b4b9c0"/><stop offset="0.7" stop-color="#f2f3f4"/><stop offset="1" stop-color="#fff"/></linearGradient></defs><rect x="-7.3" y="-7.6" width="14.6" height="15.2" rx="4" fill="#fff" stroke="#333" stroke-width="1.2"/><path d="M-5.6 -2.5h11.2v5.5q0 3 -3 3h-5.2q-3 0 -3 -3z" fill="url(#bg784)"/></g><g transform="translate(95,808)"><path d="M-8 0Q-4 -4.6 0 -4.6Q4 -4.6 8 0Q4 4.6 0 4.6Q-4 4.6 -8 0Z" fill="#9a9a9a"/><circle r="3.2" fill="#f2f2f2"/><circle r="1.9" fill="#9a9a9a"/></g><g transform="translate(120,808)"><defs><linearGradient id="bg808" x1="0" x2="1"><stop offset="0" stop-color="#b4b9c0"/><stop offset="0.7" stop-color="#f2f3f4"/><stop offset="1" stop-color="#fff"/></linearGradient></defs><rect x="-7.3" y="-7.6" width="14.6" height="15.2" rx="4" fill="#fff" stroke="#333" stroke-width="1.2"/><path d="M-5.6 -2.5h11.2v5.5q0 3 -3 3h-5.2q-3 0 -3 -3z" fill="url(#bg808)"/></g><path d="M48 826L56.5 832L48 838Z" fill="#fff" stroke="#333" stroke-width="1.2" stroke-linejoin="round"/><g transform="translate(77,832)"><path d="M-8 0Q-4 -4.6 0 -4.6Q4 -4.6 8 0Q4 4.6 0 4.6Q-4 4.6 -8 0Z" fill="#9a9a9a"/><circle r="3.2" fill="#f2f2f2"/><circle r="1.9" fill="#9a9a9a"/></g><g transform="translate(102,832)"><path d="M-8 -5.5h5.5l1.2 1.5h9.3v1.2h-16z" fill="#b5b5b5"/><rect x="-8" y="-2" width="16" height="8" fill="#a8a8a8"/></g><path d="M48 850L56.5 856L48 862Z" fill="#fff" stroke="#333" stroke-width="1.2" stroke-linejoin="round"/><g transform="translate(77,856)"><path d="M-8 0Q-4 -4.6 0 -4.6Q4 -4.6 8 0Q4 4.6 0 4.6Q-4 4.6 -8 0Z" fill="#9a9a9a"/><circle r="3.2" fill="#f2f2f2"/><circle r="1.9" fill="#9a9a9a"/></g><g transform="translate(102,856)"><path d="M-8 -5.5h5.5l1.2 1.5h9.3v1.2h-16z" fill="#b5b5b5"/><rect x="-8" y="-2" width="16" height="8" fill="#a8a8a8"/></g><path d="M48 874L56.5 880L48 886Z" fill="#fff" stroke="#333" stroke-width="1.2" stroke-linejoin="round"/><g transform="translate(77,880)"><path d="M-8 0Q-4 -4.6 0 -4.6Q4 -4.6 8 0Q4 4.6 0 4.6Q-4 4.6 -8 0Z" fill="#9a9a9a"/><circle r="3.2" fill="#f2f2f2"/><circle r="1.9" fill="#9a9a9a"/></g><g transform="translate(102,880)"><path d="M-8 -5.5h5.5l1.2 1.5h9.3v1.2h-16z" fill="#b5b5b5"/><rect x="-8" y="-2" width="16" height="8" fill="#a8a8a8"/></g><g transform="translate(76.5,904)"><path d="M-8 -4l3 -3.5h9.5v11l-3 3.5h-9.5z" fill="#5aa5e0"/><path d="M-8 -4h9.5v11h-9.5z" fill="#6cb2ea"/><path d="M1.5 -4l3 -3.5v11l-3 3.5z" fill="#3f8cc9"/><path d="M-8 7h9.5l3 -3.5v1.6l-3 3.5h-9.5z" fill="#b9b9b9"/><path d="M7.2 6.5v-12.5" stroke="#222" stroke-width="1"/><path d="M5.6 -4.5l1.6 -3 1.6 3z" fill="#222"/></g><g transform="translate(76.5,928)"><path d="M-8 -4l3 -3.5h9.5v11l-3 3.5h-9.5z" fill="#5aa5e0"/><path d="M-8 -4h9.5v11h-9.5z" fill="#6cb2ea"/><path d="M1.5 -4l3 -3.5v11l-3 3.5z" fill="#3f8cc9"/><path d="M-8 7h9.5l3 -3.5v1.6l-3 3.5h-9.5z" fill="#b9b9b9"/><path d="M7.2 6.5v-12.5" stroke="#222" stroke-width="1"/><path d="M5.6 -4.5l1.6 -3 1.6 3z" fill="#222"/></g><g transform="translate(76.5,952)"><path d="M-8 8V-3.5L-4.5 -7.5H1Q8.5 -6.5 8.5 2V5L5.5 8Z" fill="#d9d9d9" stroke="#555" stroke-width="1"/><path d="M0 -8.2Q8.8 -7 9 2L5.8 1.5Q5 -4 -0.5 -5.2Z" fill="#3f8fd2"/></g><g transform="translate(76.5,976)"><path d="M-8 -4l3 -3.5h9.5v11l-3 3.5h-9.5z" fill="#5aa5e0"/><path d="M-8 -4h9.5v11h-9.5z" fill="#6cb2ea"/><path d="M1.5 -4l3 -3.5v11l-3 3.5z" fill="#3f8cc9"/><path d="M-8 7h9.5l3 -3.5v1.6l-3 3.5h-9.5z" fill="#b9b9b9"/><path d="M7.2 6.5v-12.5" stroke="#222" stroke-width="1"/><path d="M5.6 -4.5l1.6 -3 1.6 3z" fill="#222"/></g><g transform="translate(76.5,1000)"><path d="M-8 8V-3.5L-4.5 -7.5H1Q8.5 -6.5 8.5 2V5L5.5 8Z" fill="#d9d9d9" stroke="#555" stroke-width="1"/><path d="M0 -8.2Q8.8 -7 9 2L5.8 1.5Q5 -4 -0.5 -5.2Z" fill="#3f8fd2"/></g><g transform="translate(76.5,1024)"><path d="M-8 -4l3 -3.5h9.5v11l-3 3.5h-9.5z" fill="#5aa5e0"/><path d="M-8 -4h9.5v11h-9.5z" fill="#6cb2ea"/><path d="M1.5 -4l3 -3.5v11l-3 3.5z" fill="#3f8cc9"/><path d="M-8 7h9.5l3 -3.5v1.6l-3 3.5h-9.5z" fill="#b9b9b9"/><path d="M7.2 6.5v-12.5" stroke="#222" stroke-width="1"/><path d="M5.6 -4.5l1.6 -3 1.6 3z" fill="#222"/></g><g transform="translate(76.5,1048)"><path d="M-8 -4l3 -3.5h9.5v11l-3 3.5h-9.5z" fill="#5aa5e0"/><path d="M-8 -4h9.5v11h-9.5z" fill="#6cb2ea"/><path d="M1.5 -4l3 -3.5v11l-3 3.5z" fill="#3f8cc9"/><path d="M-8 7h9.5l3 -3.5v1.6l-3 3.5h-9.5z" fill="#b9b9b9"/><path d="M7.2 6.5v-12.5" stroke="#222" stroke-width="1"/><path d="M5.6 -4.5l1.6 -3 1.6 3z" fill="#222"/></g><g transform="translate(76.5,1072)"><path d="M-8 -4l3 -3.5h9.5v11l-3 3.5h-9.5z" fill="#5aa5e0"/><path d="M-8 -4h9.5v11h-9.5z" fill="#6cb2ea"/><path d="M1.5 -4l3 -3.5v11l-3 3.5z" fill="#3f8cc9"/><path d="M-8 7h9.5l3 -3.5v1.6l-3 3.5h-9.5z" fill="#b9b9b9"/><path d="M7.2 6.5v-12.5" stroke="#222" stroke-width="1"/><path d="M5.6 -4.5l1.6 -3 1.6 3z" fill="#222"/></g><g transform="translate(76.5,1096)"><path d="M-8 -4l3 -3.5h9.5v11l-3 3.5h-9.5z" fill="#5aa5e0"/><path d="M-8 -4h9.5v11h-9.5z" fill="#6cb2ea"/><path d="M1.5 -4l3 -3.5v11l-3 3.5z" fill="#3f8cc9"/><path d="M-8 7h9.5l3 -3.5v1.6l-3 3.5h-9.5z" fill="#b9b9b9"/><path d="M7.2 6.5v-12.5" stroke="#222" stroke-width="1"/><path d="M5.6 -4.5l1.6 -3 1.6 3z" fill="#222"/></g><path d="M253.8 124.55h6l-3 3.5z" fill="#333"/><path d="M500.8 124.55h6l-3 3.5z" fill="#333"/><path d="M694.5 124.55h6l-3 3.5z" fill="#333"/><path d="M828.2 124.55h6l-3 3.5z" fill="#333"/><path d="M889 124.55h6l-3 3.5z" fill="#333"/><path d="M946.5 124.55h6l-3 3.5z" fill="#333"/><path d="M1022.5 124.55h6l-3 3.5z" fill="#333"/><path d="M1102 124.55h6l-3 3.5z" fill="#333"/><path d="M93 94h6l-3 4z" fill="#333"/><polyline points="146.5,83.6 173.3,83.6 173.3,98.8" fill="none" stroke="#555" stroke-width="1" stroke-dasharray="9 2.5"/><polyline points="146.5,83.6 146.5,110.2 162.8,110.2" fill="none" stroke="#555" stroke-width="1" stroke-dasharray="9 2.5"/><polygon points="145.2,82.4 147.8,82.4 147.8,84.9 145.2,84.9" fill="#444" stroke="none" stroke-width="0.8" stroke-linejoin="round" /><polygon points="172.1,82.4 174.6,82.4 174.6,84.9 172.1,84.9" fill="#444" stroke="none" stroke-width="0.8" stroke-linejoin="round" /><polygon points="145.2,109.0 147.8,109.0 147.8,111.5 145.2,111.5" fill="#444" stroke="none" stroke-width="0.8" stroke-linejoin="round" /><polyline points="153.4,103.7 153.4,90.5 166.5,90.5" fill="none" stroke="#555" stroke-width="1" stroke-dasharray="3.5 1.5"/><path d="M166.47 90.49Q165.67 100.53 155.97 103.73" fill="none" stroke="#555" stroke-width="1" stroke-linejoin="round" stroke-linecap="round" /><polygon points="152.1,89.2 154.6,89.2 154.6,91.7 152.1,91.7" fill="#444" stroke="none" stroke-width="0.8" stroke-linejoin="round" /><polygon points="165.2,89.2 167.7,89.2 167.7,91.7 165.2,91.7" fill="#444" stroke="none" stroke-width="0.8" stroke-linejoin="round" /><polygon points="152.1,102.5 154.6,102.5 154.6,105.0 152.1,105.0" fill="#444" stroke="none" stroke-width="0.8" stroke-linejoin="round" /><polygon points="167.6,100.2 172.2,100.2 172.2,104.8 176.7,104.8 176.7,109.3 172.2,109.3 172.2,113.9 167.6,113.9 167.6,109.3 163.0,109.3 163.0,104.8 167.6,104.8" fill="#21a84a" stroke="none" stroke-width="0.9" stroke-linejoin="round" /><polygon points="189.3,109.1 207.3,109.1 213.0,103.4 213.0,107.9 207.3,113.7 189.3,113.7" fill="#b9b9b9" stroke="none" stroke-width="0.9" stroke-linejoin="round" /><polygon points="189.3,88.6 207.3,88.6 207.3,109.1 189.3,109.1" fill="#6cb2ea" stroke="none" stroke-width="0.9" stroke-linejoin="round" /><polygon points="189.3,88.6 195.3,82.3 213.0,82.3 207.3,88.6" fill="#8ccbf5" stroke="none" stroke-width="0.9" stroke-linejoin="round" /><polygon points="207.3,88.6 213.0,82.3 213.0,103.4 207.3,109.1" fill="#3f8cc9" stroke="none" stroke-width="0.9" stroke-linejoin="round" /><polyline points="216.7,107.9 216.7,86.3" fill="none" stroke="#222" stroke-width="1.1" /><polygon points="214.2,87.4 216.7,82.8 219.2,87.4" fill="#222" stroke="none" stroke-width="0.9" stroke-linejoin="round" /><path d="M231.28 95.97Q246.12 85.13 262.66 95.63L257.53 100.53Q246.12 94.83 236.99 101.67Z" fill="#8ccbf5" stroke="none" stroke-width="1" stroke-linejoin="round" stroke-linecap="round" /><polygon points="231.3,96.0 237.0,101.7 237.0,110.8 231.3,105.4" fill="#3f8cc9" stroke="none" stroke-width="0.9" stroke-linejoin="round" /><path d="M236.99 101.67Q246.12 94.83 257.53 100.53L257.53 110.23Q246.12 104.53 236.99 110.80Z" fill="#6cb2ea" stroke="none" stroke-width="1" stroke-linejoin="round" stroke-linecap="round" /><polygon points="257.5,100.5 262.7,96.0 262.7,105.1 257.5,110.2" fill="#fff" stroke="#444" stroke-width="0.9" stroke-linejoin="round" /><path d="M260.72 89.46Q246.12 79.42 232.99 88.32" fill="none" stroke="#222" stroke-width="1" stroke-linejoin="round" stroke-linecap="round" /><polygon points="231.5,89.9 233.0,86.0 235.6,89.5" fill="#222" stroke="none" stroke-width="0.9" stroke-linejoin="round" /><polygon points="274.4,88.3 280.3,82.3 305.7,82.3 300.3,88.3" fill="#f4f4f4" stroke="#555" stroke-width="0.9" stroke-linejoin="round" /><polygon points="300.3,88.3 305.7,82.3 305.7,107.9 300.3,113.7" fill="#b9b9b9" stroke="#555" stroke-width="0.9" stroke-linejoin="round" /><polygon points="274.4,88.3 300.3,88.3 300.3,113.7 274.4,113.7" fill="#dcdcdc" stroke="#555" stroke-width="0.9" stroke-linejoin="round" /><ellipse cx="287.4" cy="100.5" rx="8.2" ry="8.2" fill="#fff" stroke="#444" stroke-width="0.9" transform="rotate(0 287.4 100.5)" />
<ellipse cx="287.4" cy="100.5" rx="6.4" ry="6.4" fill="#6cb2ea" stroke="none" stroke-width="0" transform="rotate(0 287.4 100.5)" />
<path d="M283.20 95.40Q288.33 93.12 292.90 97.11Q294.04 100.53 292.90 102.81Q286.05 102.24 283.20 95.40Z" fill="#fff" stroke="none" stroke-width="1" stroke-linejoin="round" stroke-linecap="round" /><polyline points="320.3,87.4 341.4,87.4" fill="none" stroke="#555" stroke-width="1" /><polyline points="320.3,87.4 320.3,108.5 341.4,108.5" fill="none" stroke="#555" stroke-width="1" /><polygon points="317.1,84.2 323.5,84.2 323.5,90.6 317.1,90.6" fill="#fff" stroke="#555" stroke-width="0.9" stroke-linejoin="round" /><polygon points="338.1,84.1 344.7,84.1 344.7,90.7 338.1,90.7" fill="#6cb2ea" stroke="none" stroke-width="0.8" stroke-linejoin="round" /><polygon points="317.0,105.2 323.6,105.2 323.6,111.8 317.0,111.8" fill="#6cb2ea" stroke="none" stroke-width="0.8" stroke-linejoin="round" /><polygon points="338.1,105.2 344.7,105.2 344.7,111.8 338.1,111.8" fill="#6cb2ea" stroke="none" stroke-width="0.8" stroke-linejoin="round" /><polygon points="372.4,88.8 377.8,82.5 383.2,82.5 383.2,113.5 372.4,113.5" fill="#e2e2e2" stroke="#555" stroke-width="0.9" stroke-linejoin="round" /><polygon points="379.2,88.8 387.9,88.8 387.9,113.5 379.2,113.5" fill="#6cb2ea" stroke="none" stroke-width="0.9" stroke-linejoin="round" /><polygon points="379.2,88.8 383.9,82.5 393.6,82.5 387.9,88.8" fill="#8ccbf5" stroke="none" stroke-width="0.9" stroke-linejoin="round" /><polygon points="387.9,88.8 393.6,82.5 393.6,107.7 387.9,113.5" fill="#3f8cc9" stroke="none" stroke-width="0.9" stroke-linejoin="round" /><polygon points="391.3,96.2 397.4,96.2 397.4,98.4 391.3,98.4" fill="#fff" stroke="none" stroke-width="0.9" stroke-linejoin="round" /><polyline points="392.0,97.3 398.7,97.3" fill="none" stroke="#222" stroke-width="1" /><polygon points="397.1,95.2 401.1,97.3 397.1,99.5" fill="#222" stroke="none" stroke-width="0.9" stroke-linejoin="round" /><polygon points="414.6,89.5 421.0,82.5 432.4,82.5 426.4,89.5" fill="#f4f4f4" stroke="#555" stroke-width="0.9" stroke-linejoin="round" /><polygon points="438.5,102.3 445.9,96.2 445.9,107.0 438.5,113.5" fill="#b9b9b9" stroke="#555" stroke-width="0.9" stroke-linejoin="round" /><path d="M414.63 89.49L426.36 89.49Q437.83 90.83 438.50 102.30L438.50 113.49 414.63 113.49Z" fill="#dcdcdc" stroke="#555" stroke-width="0.9" stroke-linejoin="round" stroke-linecap="round" /><path d="M426.36 89.49L432.16 82.47Q444.57 84.09 445.92 96.23L438.77 102.30Q437.83 90.83 426.36 89.49Z" fill="#6cb2ea" stroke="none" stroke-width="1" stroke-linejoin="round" stroke-linecap="round" /><polygon points="457.4,89.5 464.5,82.5 488.4,82.5 481.3,89.5" fill="#fff" stroke="#555" stroke-width="0.9" stroke-linejoin="round" /><polygon points="481.3,89.5 488.4,82.5 488.4,106.7 481.3,113.5" fill="#b9b9b9" stroke="#555" stroke-width="0.9" stroke-linejoin="round" /><polygon points="457.4,89.5 481.3,89.5 481.3,113.5 457.4,113.5" fill="#dcdcdc" stroke="#555" stroke-width="0.9" stroke-linejoin="round" /><polygon points="461.0,93.5 477.6,93.5 477.6,109.7 461.0,109.7" fill="#ececec" stroke="none" stroke-width="0.9" stroke-linejoin="round" /><polygon points="461.0,93.5 468.8,93.5 468.8,102.3 461.0,109.7" fill="#3f8cc9" stroke="none" stroke-width="0.9" stroke-linejoin="round" /><polygon points="461.0,109.7 468.8,102.3 477.6,102.3 477.6,109.7" fill="#8ccbf5" stroke="none" stroke-width="0.9" stroke-linejoin="round" /><polygon points="510.7,87.5 514.0,82.5 532.0,82.5 528.2,87.5" fill="#8ccbf5" stroke="none" stroke-width="0.9" stroke-linejoin="round" /><polygon points="528.2,87.5 532.0,82.5 532.0,98.9 528.2,103.6" fill="#3f8cc9" stroke="none" stroke-width="0.9" stroke-linejoin="round" /><polygon points="510.7,87.5 528.2,87.5 528.2,103.6 510.7,103.6" fill="#6cb2ea" stroke="none" stroke-width="0.9" stroke-linejoin="round" /><polygon points="500.3,96.9 503.9,92.2 510.7,92.2 510.7,96.9" fill="#8ccbf5" stroke="none" stroke-width="0.9" stroke-linejoin="round" /><polygon points="518.1,103.6 521.7,103.6 521.7,109.0 518.1,113.5" fill="#3f8cc9" stroke="none" stroke-width="0.9" stroke-linejoin="round" /><polygon points="500.3,96.9 510.7,96.9 510.7,103.6 518.1,103.6 518.1,113.5 500.3,113.5" fill="#6cb2ea" stroke="none" stroke-width="0.9" stroke-linejoin="round" /><polygon points="545.4,88.4 551.8,82.5 572.7,82.5 567.3,88.4" fill="#8ccbf5" stroke="none" stroke-width="0.9" stroke-linejoin="round" /><polygon points="567.3,88.4 572.7,82.5 572.7,92.2 567.3,97.6" fill="#3f8cc9" stroke="none" stroke-width="0.9" stroke-linejoin="round" /><polygon points="545.4,88.4 567.3,88.4 567.3,97.6 545.4,97.6" fill="#6cb2ea" stroke="none" stroke-width="0.9" stroke-linejoin="round" /><polygon points="567.3,102.3 572.7,97.6 572.7,107.3 567.3,112.4" fill="#b9b9b9" stroke="#555" stroke-width="0.9" stroke-linejoin="round" /><polygon points="545.4,102.3 567.3,102.3 567.3,112.4 545.4,112.4" fill="#dcdcdc" stroke="#555" stroke-width="0.9" stroke-linejoin="round" /><polyline points="543.0,100.5 567.3,100.5 575.1,92.9" fill="none" stroke="#1e88e5" stroke-width="1.2" /><polyline points="589.9,97.8 614.2,97.8" fill="none" stroke="#333" stroke-width="1.6" /><polyline points="602.1,85.7 602.1,110.0" fill="none" stroke="#333" stroke-width="1.6" /><polygon points="586.6,97.8 594.0,92.7 594.0,103.0" fill="#333" stroke="none" stroke-width="0.9" stroke-linejoin="round" /><polygon points="617.6,97.8 610.2,92.7 610.2,103.0" fill="#333" stroke="none" stroke-width="0.9" stroke-linejoin="round" /><polygon points="602.1,82.3 597.0,89.8 607.2,89.8" fill="#333" stroke="none" stroke-width="0.9" stroke-linejoin="round" /><polygon points="602.1,113.8 597.0,106.2 607.2,106.2" fill="#333" stroke="none" stroke-width="0.9" stroke-linejoin="round" /><polygon points="640.4,101.6 652.5,101.6 652.5,113.1 640.4,113.1" fill="#dcdcdc" stroke="#555" stroke-width="0.9" stroke-linejoin="round" /><polygon points="652.5,101.6 655.9,98.3 667.6,98.3 664.4,101.6" fill="#f6f6f6" stroke="#555" stroke-width="0.9" stroke-linejoin="round" /><polygon points="664.4,101.6 667.6,98.3 667.6,109.7 664.4,113.1" fill="#b9b9b9" stroke="#555" stroke-width="0.9" stroke-linejoin="round" /><polygon points="652.5,101.6 664.4,101.6 664.4,113.1 652.5,113.1" fill="#dcdcdc" stroke="#555" stroke-width="0.9" stroke-linejoin="round" /><polygon points="640.4,90.8 643.8,86.1 655.9,86.1 652.5,90.8" fill="#8ccbf5" stroke="none" stroke-width="0.9" stroke-linejoin="round" /><polygon points="652.5,90.8 655.9,86.1 655.9,97.6 652.5,101.6" fill="#3f8cc9" stroke="none" stroke-width="0.9" stroke-linejoin="round" /><polygon points="640.4,90.8 652.5,90.8 652.5,101.6 640.4,101.6" fill="#5aa5e0" stroke="none" stroke-width="0.9" stroke-linejoin="round" /><polygon points="663.3,82.5 664.6,87.6 669.0,84.8 666.3,89.3 671.4,90.6 666.3,91.8 669.0,96.3 664.6,93.6 663.3,98.7 662.1,93.6 657.6,96.3 660.3,91.8 655.2,90.6 660.3,89.3 657.6,84.8 662.1,87.6" fill="#f5a21b" stroke="none" stroke-width="0.9" stroke-linejoin="round" /><polygon points="685.2,92.2 692.3,84.8 697.7,84.8 697.7,95.6 692.7,96.5 692.7,104.3 686.9,110.4 685.2,109.7" fill="#dcdcdc" stroke="#555" stroke-width="0.9" stroke-linejoin="round" /><polygon points="692.3,84.8 697.7,84.8 697.7,95.6 692.7,96.5" fill="#efefef" stroke="#555" stroke-width="0.7" stroke-linejoin="round" /><ellipse cx="695.0" cy="85.4" rx="2.4" ry="1.1" fill="#fff" stroke="#555" stroke-width="0.7" transform="rotate(0 695.0 85.4)" />
<polygon points="700.8,94.9 705.8,93.5 705.8,86.8 713.0,92.9 713.0,111.1 705.8,105.0 701.1,105.0" fill="#dcdcdc" stroke="#555" stroke-width="0.9" stroke-linejoin="round" /><polygon points="700.8,94.9 705.8,93.5 705.8,105.0 701.1,105.0" fill="#b9b9b9" stroke="#555" stroke-width="0.7" stroke-linejoin="round" /><polyline points="694.3,96.2 694.3,101.9" fill="none" stroke="#1e88e5" stroke-width="1" /><polyline points="703.8,89.9 703.8,95.6" fill="none" stroke="#1e88e5" stroke-width="1" /><polygon points="750.3,89.5 757.0,82.5 776.6,82.5 776.6,109.0 750.3,109.0" fill="#ededed" stroke="#dedede" stroke-width="0.9" stroke-linejoin="round" /><ellipse cx="773.9" cy="89.9" rx="7.8" ry="7.8" fill="#c3dbf0" stroke="none" stroke-width="0" transform="rotate(0 773.9 89.9)" />
<polygon points="773.9,84.8 777.7,89.5 775.3,89.5 775.3,92.2 771.9,94.9 772.6,89.5 770.1,89.5" fill="#f6fafd" stroke="none" stroke-width="0.9" stroke-linejoin="round" /><polyline points="768.2,104.7 781.7,104.7" fill="none" stroke="#dcdcdc" stroke-width="1.3" /><polyline points="768.2,110.8 781.7,110.8" fill="none" stroke="#dcdcdc" stroke-width="1.3" /><polyline points="771.9,102.3 771.9,107.3" fill="none" stroke="#c3dbf0" stroke-width="1.3" /><polyline points="778.6,108.4 778.6,113.5" fill="none" stroke="#dcdcdc" stroke-width="1.3" /><polygon points="793.5,82.5 822.5,82.5 822.5,110.4 793.5,110.4" fill="#efefef" stroke="#dedede" stroke-width="0.9" stroke-linejoin="round" /><polyline points="796.8,91.5 796.8,107.0" fill="none" stroke="#dcdcdc" stroke-width="0.8" /><polyline points="802.9,91.5 802.9,107.0" fill="none" stroke="#dcdcdc" stroke-width="0.8" /><polyline points="809.0,91.5 809.0,107.0" fill="none" stroke="#dcdcdc" stroke-width="0.8" /><polyline points="815.0,91.5 815.0,107.0" fill="none" stroke="#dcdcdc" stroke-width="0.8" /><polyline points="796.8,91.5 821.1,91.5" fill="none" stroke="#dcdcdc" stroke-width="0.8" /><polyline points="796.8,96.2 821.1,96.2" fill="none" stroke="#dcdcdc" stroke-width="0.8" /><polyline points="796.8,101.6 821.1,101.6" fill="none" stroke="#dcdcdc" stroke-width="0.8" /><polyline points="796.8,107.0 821.1,107.0" fill="none" stroke="#dcdcdc" stroke-width="0.8" /><ellipse cx="817.1" cy="89.9" rx="7.8" ry="7.8" fill="#c3dbf0" stroke="none" stroke-width="0" transform="rotate(0 817.1 89.9)" />
<polygon points="817.1,84.8 820.8,89.5 818.4,89.5 818.4,92.2 815.0,94.9 815.7,89.5 813.3,89.5" fill="#f6fafd" stroke="none" stroke-width="0.9" stroke-linejoin="round" /><polyline points="811.4,104.7 824.9,104.7" fill="none" stroke="#dcdcdc" stroke-width="1.3" /><polyline points="811.4,110.8 824.9,110.8" fill="none" stroke="#dcdcdc" stroke-width="1.3" /><polyline points="815.0,102.3 815.0,107.3" fill="none" stroke="#c3dbf0" stroke-width="1.3" /><polyline points="821.8,108.4 821.8,113.5" fill="none" stroke="#dcdcdc" stroke-width="1.3" /><polygon points="864.2,91.5 872.5,82.5 880.6,82.5 871.9,91.5" fill="#fff" stroke="#333" stroke-width="1" stroke-linejoin="round" /><polygon points="864.2,91.5 871.9,91.5 871.9,112.4 864.2,112.4" fill="#dcdcdc" stroke="#333" stroke-width="1" stroke-linejoin="round" /><polygon points="873.2,90.8 882.0,82.7 882.0,103.6 873.2,112.4" fill="#5cc283" stroke="none" stroke-width="0.9" stroke-linejoin="round" /><polygon points="885.3,90.8 894.1,82.5 894.1,103.6 885.3,112.4" fill="#e89b64" stroke="none" stroke-width="0.9" stroke-linejoin="round" /><polygon points="924.0,100.0 951.8,100.0 951.8,105.7 924.0,105.7" fill="#f7a600" stroke="none" stroke-width="0.9" stroke-linejoin="round" /><polyline points="926.8,100.0 926.8,101.6" fill="none" stroke="#b37400" stroke-width="0.6" /><polyline points="929.6,100.0 929.6,102.4" fill="none" stroke="#b37400" stroke-width="0.6" /><polyline points="932.4,100.0 932.4,101.6" fill="none" stroke="#b37400" stroke-width="0.6" /><polyline points="935.2,100.0 935.2,102.4" fill="none" stroke="#b37400" stroke-width="0.6" /><polyline points="937.9,100.0 937.9,101.6" fill="none" stroke="#b37400" stroke-width="0.6" /><polyline points="940.7,100.0 940.7,102.4" fill="none" stroke="#b37400" stroke-width="0.6" /><polyline points="943.5,100.0 943.5,101.6" fill="none" stroke="#b37400" stroke-width="0.6" /><polyline points="946.3,100.0 946.3,102.4" fill="none" stroke="#b37400" stroke-width="0.6" /><polyline points="949.1,100.0 949.1,101.6" fill="none" stroke="#b37400" stroke-width="0.6" /><polyline points="924.5,89.9 924.5,98.9" fill="none" stroke="#555" stroke-width="0.9" /><polyline points="951.4,89.9 951.4,98.9" fill="none" stroke="#555" stroke-width="0.9" /><polyline points="926.5,94.2 949.4,94.2" fill="none" stroke="#555" stroke-width="0.9" /><polygon points="925.1,94.2 929.2,92.2 929.2,96.2" fill="#555" stroke="none" stroke-width="0.9" stroke-linejoin="round" /><polygon points="950.8,94.2 946.7,92.2 946.7,96.2" fill="#555" stroke="none" stroke-width="0.9" stroke-linejoin="round" /><polygon points="983.1,93.5 987.8,86.1 1008.7,86.1 1001.3,93.5" fill="#f4f4f4" stroke="#555" stroke-width="0.9" stroke-linejoin="round" /><polygon points="1001.3,93.5 1008.7,86.1 1008.7,104.3 1001.3,111.7" fill="#b9b9b9" stroke="#555" stroke-width="0.9" stroke-linejoin="round" /><polygon points="983.1,93.5 1001.3,93.5 1001.3,111.7 983.1,111.7" fill="#dcdcdc" stroke="#555" stroke-width="0.9" stroke-linejoin="round" /><polygon points="979.1,86.1 987.8,86.1 987.8,82.1 996.3,87.9 987.8,93.5 987.8,89.9 979.1,89.9" fill="#1e88e5" stroke="none" stroke-width="0.9" stroke-linejoin="round" /><g transform="rotate(-32 1002.9 107.0)"><rect x="994.4" y="104.0" width="9" height="6" rx="3" fill="none" stroke="#1a1a1a" stroke-width="1.8"/><rect x="1002.4" y="104.0" width="9" height="6" rx="3" fill="none" stroke="#1a1a1a" stroke-width="1.8"/></g><polygon points="1023.2,83.4 1051.9,83.4 1051.9,111.7 1023.2,111.7" fill="#8ccbf5" stroke="#4a90c9" stroke-width="0.8" stroke-linejoin="round" /><path d="M1023.58 111.33L1023.58 101.62Q1030.32 92.18 1036.39 99.60L1041.78 105.00Q1046.50 99.60 1051.49 105.00L1051.49 111.33Z" fill="#3f8fcc" stroke="none" stroke-width="1" stroke-linejoin="round" stroke-linecap="round" /><ellipse cx="1043.8" cy="90.8" rx="3.0" ry="3.0" fill="#ffffc8" stroke="none" stroke-width="0" transform="rotate(0 1043.8 90.8)" />
<polygon points="1078.2,82.5 1105.8,82.5 1105.8,103.6 1078.2,103.6" fill="none" stroke="#7be87b" stroke-width="1" stroke-linejoin="round" stroke-dasharray="3.2 1.6"/><polygon points="1099.1,96.2 1099.1,111.7 1102.9,108.4 1105.6,114.4 1108.3,113.1 1105.4,107.3 1110.2,107.0" fill="#fff" stroke="none" stroke-width="0.9" stroke-linejoin="round" /><rect x="11.5" y="3.5" width="13.5" height="15" rx="2.2" fill="#ff7a18"/><rect x="11.5" y="13.5" width="13.5" height="5" rx="1.5" fill="#8a3a0a"/><rect x="11.5" y="12.5" width="13.5" height="2.5" fill="#ff7a18"/><rect x="17.2" y="32.0" width="3.8" height="3.8" rx="0.6" fill="#555"/><rect x="17.2" y="36.9" width="3.8" height="3.8" rx="0.6" fill="#555"/><rect x="17.2" y="41.8" width="3.8" height="3.8" rx="0.6" fill="#555"/><rect x="22.2" y="32.0" width="3.8" height="3.8" rx="0.6" fill="#555"/><rect x="22.2" y="36.9" width="3.8" height="3.8" rx="0.6" fill="#555"/><rect x="22.2" y="41.8" width="3.8" height="3.8" rx="0.6" fill="#555"/><rect x="27.2" y="32.0" width="3.8" height="3.8" rx="0.6" fill="#555"/><rect x="27.2" y="36.9" width="3.8" height="3.8" rx="0.6" fill="#555"/><rect x="27.2" y="41.8" width="3.8" height="3.8" rx="0.6" fill="#555"/><path d="M50 31.2h8l5 5v10.3h-13z" fill="#5a5a5a"/><path d="M58.3 31.2v4.8h4.7" fill="none" stroke="#ccc" stroke-width="1"/><path d="M69.25 36.5h6.5l-3.25 4z" fill="#555"/><path d="M95 32h12l2 2v11.6h-14z" fill="#9a9a9a"/><rect x="98" y="32.8" width="7.5" height="4.2" fill="#ccc"/><rect x="98" y="40" width="8" height="5.6" fill="#ccc"/><rect x="101.5" y="40" width="1.2" height="5.6" fill="#9a9a9a"/><path d="M129 38.2h6.5q5 0 5 6.3" fill="none" stroke="#555" stroke-width="1.8"/><path d="M133.5 33.3v9.8l-5.5 -4.9z" fill="#555"/><path d="M148.15 36.5h6.5l-3.25 4z" fill="#555"/><path d="M180 38.2h-6.5q-5 0 -5 6.3" fill="none" stroke="#aaa" stroke-width="1.8"/><path d="M175.5 33.3v9.8l5.5 -4.9z" fill="#aaa"/><path d="M187.15 36.5h6.5l-3.25 4z" fill="#aaa"/><path d="M824.8 41.7l6.5 -3v7.2l-6.5 3.2z" fill="#d96a10"/><path d="M824.8 41.7l-6.5 -3v7.2l6.5 3.2z" fill="#f28c28"/><path d="M824.8 41.7l6.5 -3 -6.5 -3 -6.5 3z" fill="#ffb060"/><path d="M1547 37.3l8 8M1555 37.3l-8 8" stroke="#666" stroke-width="1.4"/><path d="M1574 40.5h12.5M1580.2 34.2v12.6" stroke="#777" stroke-width="2.6"/><circle cx="1762.7" cy="39.2" r="7.6" fill="#555"/><path d="M1757.5 41a5.4 5.4 0 1 1 3.5 3.4" fill="none" stroke="#eee" stroke-width="1.6"/><path d="M1760 43l5 -5" stroke="#eee" stroke-width="1.6"/><path d="M1765.8 35.8v4h-4z" fill="#eee"/><circle cx="1795.9" cy="39.2" r="7.8" fill="#555"/><circle cx="1795.9" cy="39.2" r="5.6" fill="none" stroke="#e8e8e8" stroke-width="1.1"/><path d="M1795.9 35.5v4h3.4" fill="none" stroke="#e8e8e8" stroke-width="1.4"/><path d="M1822 45.5h12.8q-2 -2 -2 -5.5 0 -5.5 -4.4 -6.3 -4.4 0.8 -4.4 6.3 0 3.5 -2 5.5z" fill="#555"/><circle cx="1828.4" cy="47" r="1.6" fill="#555"/><circle cx="1833.2" cy="34.3" r="2.9" fill="#1a93d6"/><circle cx="1861.6" cy="39.2" r="7.8" fill="#555"/><defs><radialGradient id="av" cx="0.5" cy="0.3" r="0.8"><stop offset="0" stop-color="#c9d6e6"/><stop offset="1" stop-color="#7f95b5"/></radialGradient><clipPath id="avc"><circle cx="1902.8" cy="39.2" r="12"/></clipPath></defs><circle cx="1902.8" cy="39.2" r="12" fill="url(#av)"/><g clip-path="url(#avc)"><ellipse cx="1903.3" cy="36" rx="4.6" ry="5.8" fill="#4a5a74"/><path d="M1892 53q1 -9 8 -10.5h6q7 1.5 8 10.5z" fill="#4a5a74"/></g><path d="M1806.5 10.5h10.5" stroke="#111" stroke-width="1.1"/><rect x="1852.5" y="7.5" width="8" height="8" fill="none" stroke="#111" stroke-width="1.1" rx="1"/><path d="M1854.8 7.5v-1.3q0 -1 1 -1h6q1 0 1 1v6q0 1 -1 1h-1.3" fill="none" stroke="#111" stroke-width="1.1"/><path d="M1897.5 5l10.5 10.5M1908 5l-10.5 10.5" stroke="#111" stroke-width="1.2"/><path d="M0 98.5l2.5 -3.5 3 3.5z" fill="#444"/><path d="M0 1029l3 3.5 0 -3.5z" fill="#444"/><path d="M0 1065l2 3 2 -3z" fill="#ccc"/><rect x="850" y="1130" width="237" height="23.5" fill="#f2f2f2"/><path d="M874.4 1140.6h5.4l-2.7 3.2z" fill="#222"/><path d="M985.4 1140.6h5.4l-2.7 3.2z" fill="#222"/><path d="M1015.3 1140.6h5.4l-2.7 3.2z" fill="#222"/><path d="M1046.3 1140.6h5.4l-2.7 3.2z" fill="#222"/><path d="M1077.3 1140.6h5.4l-2.7 3.2z" fill="#222"/><path d="M861.3 1134v13.5" stroke="#222" stroke-width="2.4"/><path d="M861.3 1134v13.5" stroke="#fff" stroke-width="0.9"/><path d="M858.3 1136l3 -3.6 3 3.6z" fill="#fff" stroke="#222" stroke-width="0.8"/><path d="M865 1139.3q4 1.2 3.4 3 -1 2.6 -9 2.6h-4" fill="none" stroke="#222" stroke-width="1.2"/><path d="M857.8 1138.7q-4.5 0.8 -4.6 2.8" fill="none" stroke="#222" stroke-width="1.2"/><path d="M857.5 1142.2v5.4l-4 -2.7z" fill="#222"/><rect x="886.3" y="1139" width="15.2" height="10" fill="#f4f4f4" stroke="#333" stroke-width="1.1"/><rect x="889.5" y="1142.6" width="8.8" height="3.6" fill="#a5b4c8" stroke="#333" stroke-width="0.9"/><path d="M888 1138.5l3 -3.8 2.5 2.2 4.5 -2 0.2 3.6" fill="#ddd" stroke="#333" stroke-width="0.9"/><path d="M914.5 1142.5l-1.8 -1.5q-1.2 -0.3 -0.8 1l3.2 5.2q1 1.6 3 1.9h4q2.2 -0.6 2.6 -3l0.9 -6.4q-0.3 -1.2 -1.4 -0.6l-0.6 2.6 -0.2 -5.6q-0.6 -1.2 -1.6 0l-0.3 4.6 -0.4 -6.2q-0.7 -1.2 -1.6 0l-0.2 6.2 -0.9 -5.2q-0.8 -1 -1.6 0.1l0.6 8.2z" fill="#fff" stroke="#333" stroke-width="0.9" stroke-linejoin="round"/><circle cx="942.3" cy="1140.6" r="3.9" fill="#dfeaf2" stroke="#333" stroke-width="1.2"/><path d="M945.2 1143.6l4.6 4.4" stroke="#333" stroke-width="2"/><path d="M949.6 1136.3h4M951.6 1134.3v4M949.6 1140.6h4" stroke="#222" stroke-width="0.9"/><rect x="964.6" y="1134.4" width="14.6" height="14.8" fill="none" stroke="#333" stroke-width="0.9" stroke-dasharray="2 1.2"/><circle cx="970.6" cy="1140.4" r="5.4" fill="#e4eef2" stroke="#333" stroke-width="1.2"/><path d="M974.6 1144.6l4.8 4.4" stroke="#333" stroke-width="2.2"/><rect x="997.5" y="1134.3" width="15" height="11.2" rx="1" fill="#e8e8e8" stroke="#333" stroke-width="1"/><rect x="999.4" y="1136.2" width="11.2" height="7.4" fill="#86a6d6" stroke="#2a4a80" stroke-width="0.6"/><path d="M1002.5 1147.3h5.4l1.2 1.9h-7.8z" fill="#ddd" stroke="#666" stroke-width="0.5"/><rect x="1028.4" y="1134.5" width="14.8" height="14.8" fill="#e9e9ee" stroke="#333" stroke-width="1"/><path d="M1031.4 1134.5v14.8M1034.4 1134.5v14.8M1037.4 1134.5v14.8M1040.4 1134.5v14.8M1028.4 1137.5h14.8M1028.4 1140.5h14.8M1028.4 1143.5h14.8M1028.4 1146.5h14.8" stroke="#555" stroke-width="0.7"/><rect x="1059.2" y="1135.2" width="7" height="6.6" fill="#9fb6e0" stroke="#2a4a8a" stroke-width="1"/><rect x="1061.2" y="1137.3" width="3" height="2.4" fill="#c4d4f0"/><rect x="1067.0" y="1135.2" width="7" height="6.6" fill="#9fb6e0" stroke="#2a4a8a" stroke-width="1"/><rect x="1069.0" y="1137.3" width="3" height="2.4" fill="#c4d4f0"/><rect x="1059.2" y="1142.6" width="7" height="6.6" fill="#9fb6e0" stroke="#2a4a8a" stroke-width="1"/><rect x="1061.2" y="1144.7" width="3" height="2.4" fill="#c4d4f0"/><rect x="1067.0" y="1142.6" width="7" height="6.6" fill="#9fb6e0" stroke="#2a4a8a" stroke-width="1"/><rect x="1069.0" y="1144.7" width="3" height="2.4" fill="#c4d4f0"/></svg>
<span class="t" id="t0" style="left:31px;top:3.8px;font-size:12px;color:#111;font-weight:400;transform:scaleX(0.9068);">PC-9881_open v2 (g catsin) - Autodesk Fusion (個人用 ライセンスはあと 28 日で期限切れになります)</span>
<span class="t" id="t1" style="left:836px;top:33.6px;font-size:12.5px;color:#222;font-weight:400;transform:scaleX(0.9802);">PC-9881_open v2</span>
<span class="t" id="t2" style="left:1612.6px;top:31.8px;font-size:12px;color:#fff;font-weight:500;transform:scaleX(0.7564);">まもなく期限切れになります</span>
<span class="t" id="t3" style="left:52.8px;top:88px;font-size:12px;color:#222;font-weight:400;transform:scaleX(0.7188);">デザイン</span>
<span class="t" id="t4" style="left:158px;top:59.6px;font-size:12px;color:#1a8fd6;font-weight:400;transform:scaleX(0.6708);">ソリッド</span>
<span class="t" id="t5" style="left:236px;top:59.6px;font-size:12px;color:#333;font-weight:400;transform:scaleX(0.6644);">サーフェス</span>
<span class="t" id="t6" style="left:319.3px;top:59.6px;font-size:12px;color:#333;font-weight:400;transform:scaleX(0.6292);">メッシュ</span>
<span class="t" id="t7" style="left:397.3px;top:59.6px;font-size:12px;color:#333;font-weight:400;transform:scaleX(0.6458);">フォーム</span>
<span class="t" id="t8" style="left:475.4px;top:59.6px;font-size:12px;color:#333;font-weight:400;transform:scaleX(0.6800);">シート メタル</span>
<span class="t" id="t9" style="left:573.3px;top:59.6px;font-size:12px;color:#333;font-weight:400;transform:scaleX(0.6389);">プラスチック</span>
<span class="t" id="t10" style="left:666.5px;top:59.6px;font-size:12px;color:#333;font-weight:400;transform:scaleX(0.6313);">ユーティリティ</span>
<span class="t" id="t11" style="left:229.7px;top:118.6px;font-size:12px;color:#333;font-weight:400;transform:scaleX(0.8750);">作成</span>
<span class="t" id="t12" style="left:476.3px;top:118.6px;font-size:12px;color:#333;font-weight:400;transform:scaleX(0.8750);">修正</span>
<span class="t" id="t13" style="left:650.5px;top:118.6px;font-size:12px;color:#333;font-weight:400;transform:scaleX(0.6864);">アセンブリ</span>
<span class="t" id="t14" style="left:738.8px;top:118.6px;font-size:12px;color:#333;font-weight:400;transform:scaleX(0.6565);">コンフィギュレーション</span>
<span class="t" id="t15" style="left:864.6px;top:118.6px;font-size:12px;color:#333;font-weight:400;transform:scaleX(0.8750);">構築</span>
<span class="t" id="t16" style="left:922px;top:118.6px;font-size:12px;color:#333;font-weight:400;transform:scaleX(0.8750);">検査</span>
<span class="t" id="t17" style="left:998.4px;top:118.6px;font-size:12px;color:#333;font-weight:400;transform:scaleX(0.8750);">挿入</span>
<span class="t" id="t18" style="left:1078.7px;top:118.6px;font-size:12px;color:#333;font-weight:400;transform:scaleX(0.8750);">選択</span>
<span class="t" id="t19" style="left:37px;top:148.8px;font-size:12px;color:#555;font-weight:400;transform:scaleX(0.6875);">ブラウザ</span>
<span class="t" id="t20" style="left:37px;top:1135.8px;font-size:12px;color:#555;font-weight:400;transform:scaleX(0.6667);">コメント</span>
<span class="t" id="t21" style="left:15.6px;top:0.2px;font-size:8.5px;color:#fff;font-weight:700;transform:scaleX(1.1200);">F</span>
<span class="t" id="t22" style="left:1858.6px;top:31.4px;font-size:12px;color:#fff;font-weight:700;transform:scaleX(0.8857);">?</span>
<span class="t" id="t23" style="left:94.6px;top:177.1px;font-size:12px;color:#333;font-weight:400;transform:scaleX(0.7222);">ドキュメントの設定</span>
<span class="t" id="t24" style="left:99.5px;top:201.1px;font-size:12px;color:#333;font-weight:400;transform:scaleX(0.7593);">名前の付いたビュー</span>
<span class="t" id="t25" style="left:124px;top:225.1px;font-size:12px;color:#333;font-weight:400;transform:scaleX(0.8750);">原点</span>
<span class="t" id="t26" style="left:124px;top:249.1px;font-size:12px;color:#333;font-weight:400;transform:scaleX(0.7143);">ボディ</span>
<span class="t" id="t27" style="left:141.5px;top:273.1px;font-size:12px;color:#333;font-weight:400;transform:scaleX(0.7083);">フロントパネル</span>
<span class="t" id="t28" style="left:141.5px;top:297.1px;font-size:12px;color:#333;font-weight:400;transform:scaleX(0.8723);">電源LED</span>
<span class="t" id="t29" style="left:141.5px;top:321.1px;font-size:12px;color:#333;font-weight:400;transform:scaleX(0.7361);">電源スイッチ</span>
<span class="t" id="t30" style="left:141.5px;top:345.1px;font-size:12px;color:#333;font-weight:400;transform:scaleX(0.6964);">フロントパネル・FDDフレーム</span>
<span class="t" id="t31" style="left:141.5px;top:369.1px;font-size:12px;color:#333;font-weight:400;transform:scaleX(0.8947);">脚1</span>
<span class="t" id="t32" style="left:141.5px;top:393.1px;font-size:12px;color:#333;font-weight:400;transform:scaleX(0.8947);">脚2</span>
<span class="t" id="t33" style="left:141.5px;top:417.1px;font-size:12px;color:#333;font-weight:400;transform:scaleX(0.8947);">脚3</span>
<span class="t" id="t34" style="left:141.5px;top:441.1px;font-size:12px;color:#333;font-weight:400;transform:scaleX(0.8947);">脚4</span>
<span class="t" id="t35" style="left:141.5px;top:465.1px;font-size:12px;color:#333;font-weight:400;transform:scaleX(0.7740);">FDD1・LED1</span>
<span class="t" id="t36" style="left:141.5px;top:489.1px;font-size:12px;color:#333;font-weight:400;transform:scaleX(0.7808);">FDD1・LED2</span>
<span class="t" id="t37" style="left:141.5px;top:513.1px;font-size:12px;color:#333;font-weight:400;transform:scaleX(0.8226);">FDD1</span>
<span class="t" id="t38" style="left:141.5px;top:537.1px;font-size:12px;color:#333;font-weight:400;transform:scaleX(0.8226);">FDD2</span>
<span class="t" id="t39" style="left:141.5px;top:561.1px;font-size:12px;color:#333;font-weight:400;transform:scaleX(0.7740);">FDD2・LED1</span>
<span class="t" id="t40" style="left:141.5px;top:585.1px;font-size:12px;color:#333;font-weight:400;transform:scaleX(0.7808);">FDD2・LED2</span>
<span class="t" id="t41" style="left:141.5px;top:609.1px;font-size:12px;color:#333;font-weight:400;transform:scaleX(0.7089);">FDD1・レバー</span>
<span class="t" id="t42" style="left:141.5px;top:633.1px;font-size:12px;color:#333;font-weight:400;transform:scaleX(0.7089);">FDD2・レバー</span>
<span class="t" id="t43" style="left:141.5px;top:657.1px;font-size:12px;color:#333;font-weight:400;transform:scaleX(0.7500);">内部フレーム</span>
<span class="t" id="t44" style="left:141.5px;top:681.1px;font-size:12px;color:#333;font-weight:400;transform:scaleX(0.7465);">ボディ・底面</span>
<span class="t" id="t45" style="left:141.5px;top:705.1px;font-size:12px;color:#333;font-weight:400;transform:scaleX(0.7263);">ボディ・上面・左</span>
<span class="t" id="t46" style="left:141.5px;top:729.1px;font-size:12px;color:#333;font-weight:400;transform:scaleX(0.7263);">ボディ・上面・上</span>
<span class="t" id="t47" style="left:141.5px;top:753.1px;font-size:12px;color:#333;font-weight:400;transform:scaleX(0.7263);">ボディ・上面・右</span>
<span class="t" id="t48" style="left:141.5px;top:777.1px;font-size:12px;color:#333;font-weight:400;transform:scaleX(0.7222);">ボディ・背面・1</span>
<span class="t" id="t49" style="left:141.5px;top:801.1px;font-size:12px;color:#333;font-weight:400;transform:scaleX(0.7222);">ボディ・背面・2</span>
<span class="t" id="t50" style="left:124px;top:825.1px;font-size:12px;color:#333;font-weight:400;transform:scaleX(0.7000);">キャンバス</span>
<span class="t" id="t51" style="left:124px;top:849.1px;font-size:12px;color:#333;font-weight:400;transform:scaleX(0.6458);">スケッチ</span>
<span class="t" id="t52" style="left:124px;top:873.1px;font-size:12px;color:#333;font-weight:400;transform:scaleX(0.6759);">コンストラクション</span>
<span class="t" id="t53" style="left:99px;top:897.1px;font-size:12px;color:#333;font-weight:400;transform:scaleX(0.7818);">押し出し1</span>
<span class="t" id="t54" style="left:99px;top:921.1px;font-size:12px;color:#333;font-weight:400;transform:scaleX(0.7818);">押し出し2</span>
<span class="t" id="t55" style="left:99px;top:945.1px;font-size:12px;color:#333;font-weight:400;transform:scaleX(0.6818);">フィレット3</span>
<span class="t" id="t56" style="left:99px;top:969.1px;font-size:12px;color:#333;font-weight:400;transform:scaleX(0.7818);">押し出し4</span>
<span class="t" id="t57" style="left:99px;top:993.1px;font-size:12px;color:#333;font-weight:400;transform:scaleX(0.6818);">フィレット5</span>
<span class="t" id="t58" style="left:99px;top:1017.1px;font-size:12px;color:#333;font-weight:400;transform:scaleX(0.7818);">押し出し8</span>
<span class="t" id="t59" style="left:99px;top:1041.1px;font-size:12px;color:#333;font-weight:400;transform:scaleX(0.8115);">押し出し10</span>
<span class="t" id="t60" style="left:99px;top:1065.1px;font-size:12px;color:#333;font-weight:400;transform:scaleX(0.8000);">押し出し11</span>
<span class="t" id="t61" style="left:99px;top:1089.1px;font-size:12px;color:#333;font-weight:400;transform:scaleX(0.8115);">押し出し12</span>
</div></body></html>
